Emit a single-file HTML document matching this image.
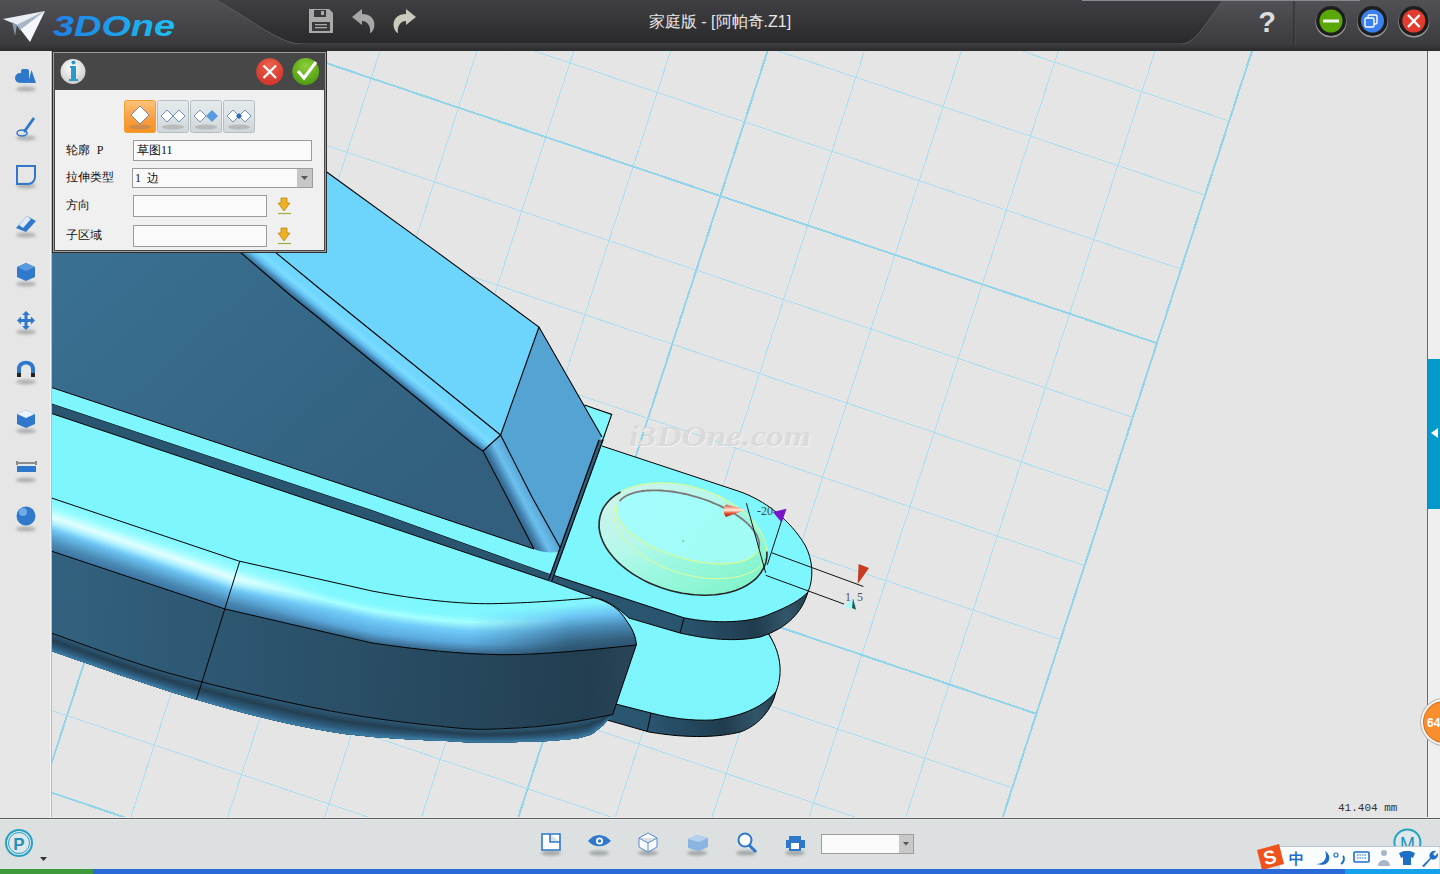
<!DOCTYPE html>
<html><head><meta charset="utf-8">
<style>
*{margin:0;padding:0;box-sizing:border-box}
html,body{width:1440px;height:874px;overflow:hidden;background:#e5e5e5;font-family:"Liberation Sans",sans-serif}
.abs{position:absolute}
.gt{stroke:#aadef0;stroke-width:1;shape-rendering:crispEdges}
.gk{stroke:#92d4ea;stroke-width:2;shape-rendering:crispEdges}
#title{left:0;top:0;width:1440px;height:51px;background:linear-gradient(#48484c,#2e2e30)}
#left{left:0;top:51px;width:51px;height:767px;background:#e6e6e6;border-right:1px solid #f4f4f4}
#rstrip{left:1428px;top:51px;width:12px;height:767px;background:#efefef;border-left:1px solid #6a6a6a}
#bottom{left:0;top:818px;width:1440px;height:52px;background:#dce0e0;border-top:1px solid #5a5a5a}
#task{left:0;top:870px;width:1440px;height:4px;background:#2a6bd8}

</style></head><body>
<svg id="scene" class="abs" width="1440" height="874" viewBox="0 0 1440 874" style="left:0;top:0">
<defs>
<clipPath id="vpclip"><rect x="51" y="51" width="1377" height="767"/></clipPath>
</defs>
<rect x="0" y="0" width="1440" height="874" fill="#e5e5e5"/>
<g clip-path="url(#vpclip)">
<g class="grid">
<line x1="-38.0" y1="-1046.6" x2="-568.2" y2="583.6" class="gt"/>
<line x1="49.3" y1="-1017.1" x2="-480.9" y2="613.0" class="gt"/>
<line x1="136.6" y1="-987.7" x2="-393.6" y2="642.5" class="gk"/>
<line x1="223.9" y1="-958.2" x2="-306.3" y2="672.0" class="gt"/>
<line x1="311.2" y1="-928.8" x2="-219.0" y2="701.4" class="gt"/>
<line x1="398.5" y1="-899.3" x2="-131.7" y2="730.9" class="gt"/>
<line x1="485.8" y1="-869.9" x2="-44.4" y2="760.3" class="gt"/>
<line x1="573.1" y1="-840.4" x2="42.9" y2="789.8" class="gk"/>
<line x1="660.4" y1="-811.0" x2="130.2" y2="819.2" class="gt"/>
<line x1="747.7" y1="-781.5" x2="217.5" y2="848.6" class="gt"/>
<line x1="835.0" y1="-752.1" x2="304.8" y2="878.1" class="gt"/>
<line x1="922.3" y1="-722.6" x2="392.1" y2="907.5" class="gt"/>
<line x1="1009.6" y1="-693.2" x2="479.4" y2="937.0" class="gk"/>
<line x1="1096.9" y1="-663.8" x2="566.7" y2="966.5" class="gt"/>
<line x1="1184.2" y1="-634.3" x2="654.0" y2="995.9" class="gt"/>
<line x1="1271.5" y1="-604.8" x2="741.3" y2="1025.3" class="gt"/>
<line x1="1358.8" y1="-575.4" x2="828.6" y2="1054.8" class="gt"/>
<line x1="1446.1" y1="-545.9" x2="915.9" y2="1084.2" class="gk"/>
<line x1="-38.0" y1="-1046.6" x2="1446.1" y2="-545.9" class="gt"/>
<line x1="-62.1" y1="-972.5" x2="1422.0" y2="-471.8" class="gt"/>
<line x1="-86.2" y1="-898.4" x2="1397.9" y2="-397.8" class="gk"/>
<line x1="-110.3" y1="-824.3" x2="1373.8" y2="-323.6" class="gt"/>
<line x1="-134.4" y1="-750.2" x2="1349.7" y2="-249.5" class="gt"/>
<line x1="-158.5" y1="-676.1" x2="1325.6" y2="-175.4" class="gt"/>
<line x1="-182.6" y1="-602.0" x2="1301.5" y2="-101.3" class="gt"/>
<line x1="-206.7" y1="-527.9" x2="1277.4" y2="-27.2" class="gk"/>
<line x1="-230.8" y1="-453.8" x2="1253.3" y2="46.9" class="gt"/>
<line x1="-254.9" y1="-379.7" x2="1229.2" y2="121.0" class="gt"/>
<line x1="-279.0" y1="-305.6" x2="1205.1" y2="195.1" class="gt"/>
<line x1="-303.1" y1="-231.5" x2="1181.0" y2="269.1" class="gt"/>
<line x1="-327.2" y1="-157.4" x2="1156.9" y2="343.2" class="gk"/>
<line x1="-351.3" y1="-83.3" x2="1132.8" y2="417.4" class="gt"/>
<line x1="-375.4" y1="-9.2" x2="1108.7" y2="491.4" class="gt"/>
<line x1="-399.5" y1="64.9" x2="1084.6" y2="565.5" class="gt"/>
<line x1="-423.6" y1="139.0" x2="1060.5" y2="639.6" class="gt"/>
<line x1="-447.7" y1="213.1" x2="1036.4" y2="713.8" class="gk"/>
<line x1="-471.8" y1="287.2" x2="1012.3" y2="787.8" class="gt"/>
<line x1="-495.9" y1="361.3" x2="988.2" y2="861.9" class="gt"/>
<line x1="-520.0" y1="435.4" x2="964.1" y2="936.0" class="gt"/>
<line x1="-544.1" y1="509.5" x2="940.0" y2="1010.1" class="gt"/>
<line x1="-568.2" y1="583.6" x2="915.9" y2="1084.2" class="gk"/>
</g>
<defs>
<linearGradient id="gDark" gradientUnits="userSpaceOnUse" x1="150" y1="150" x2="450" y2="480">
<stop offset="0" stop-color="#3a7193"/><stop offset="1" stop-color="#325f7e"/></linearGradient>
<linearGradient id="gFrontBig" gradientUnits="userSpaceOnUse" x1="52" y1="650" x2="640" y2="690">
<stop offset="0" stop-color="#32617f"/><stop offset="0.5" stop-color="#2a4f67"/><stop offset="0.92" stop-color="#223e50"/><stop offset="1" stop-color="#2b4658"/></linearGradient>
<linearGradient id="gBand2" gradientUnits="userSpaceOnUse" x1="680" y1="630" x2="810" y2="600">
<stop offset="0" stop-color="#2a5570"/><stop offset="0.55" stop-color="#203c4e"/><stop offset="0.8" stop-color="#33566a"/><stop offset="1" stop-color="#22404f"/></linearGradient>
<linearGradient id="gBand3" gradientUnits="userSpaceOnUse" x1="650" y1="725" x2="780" y2="700">
<stop offset="0" stop-color="#2a5570"/><stop offset="0.55" stop-color="#203c4e"/><stop offset="0.8" stop-color="#33566a"/><stop offset="1" stop-color="#22404f"/></linearGradient>
<linearGradient id="gBoss" gradientUnits="userSpaceOnUse" x1="640" y1="490" x2="740" y2="590">
<stop offset="0" stop-color="#a6fcfc"/><stop offset="0.5" stop-color="#a0fcf0"/><stop offset="1" stop-color="#80f4cc"/></linearGradient>
<linearGradient id="gFrontFil" gradientUnits="userSpaceOnUse" x1="503.3" y1="490" x2="524" y2="479.2">
<stop offset="0" stop-color="#34668a"/><stop offset="0.15" stop-color="#3a74a0"/><stop offset="0.55" stop-color="#6cc0ee"/><stop offset="0.78" stop-color="#62b2e2"/><stop offset="1" stop-color="#55a3d3"/></linearGradient>
<linearGradient id="gRidge" gradientUnits="userSpaceOnUse" x1="400" y1="384.4" x2="415.2" y2="365.9">
<stop offset="0" stop-color="#35678a"/><stop offset="0.06" stop-color="#3c76a2"/><stop offset="0.3" stop-color="#62c0f0"/><stop offset="0.5" stop-color="#7cdcff"/><stop offset="0.7" stop-color="#70d6fd"/><stop offset="1" stop-color="#6dd5fc"/></linearGradient>
<linearGradient id="gFil1" gradientUnits="userSpaceOnUse" x1="330" y1="580" x2="318" y2="632">
<stop offset="0" stop-color="#7ef6fe"/><stop offset="0.3" stop-color="#90fcff"/><stop offset="0.42" stop-color="#a8ffff"/><stop offset="0.6" stop-color="#6ac6f6"/><stop offset="0.8" stop-color="#3f7ca2"/><stop offset="1" stop-color="#30607f"/></linearGradient>
</defs>
<!-- lower tongue -->
<path d="M600,600 L767,630 C780,650 784,672 776,691.5 C772,710 758,726 740,732 C720,737 690,739 649,732 L600,718 Z" fill="url(#gBand3)"/>
<path d="M590,595 L690,600 L767,632 C780,650 784,672 776,691.5 C765,705 745,716 713,720 C690,721 670,718 651,713 L600,700 Z" fill="#7ef5fd" stroke="#000" stroke-width="1"/>
<line x1="651" y1="713" x2="647" y2="732" stroke="#000" stroke-width="1"/>
<path d="M776,691.5 C772,710 758,726 740,732 C720,737 690,739 649,732 L600,718" fill="none" stroke="#000" stroke-width="1"/>
<!-- big cyan lower top face -->
<path d="M51,400 L372,510 L552,575 L700,625 L640,660 L372,630 L51,530 Z" fill="#7ef6fe"/>
<!-- big piece fillet -->
<defs><clipPath id="fbclip"><path d="M51,497.8 L238.7,561 L372,591 C420,600 460,604 491.6,603.7 C530,603 570,600 594.2,597.6 C610,602 620,610 626,620 C632,628 636,636 636.3,645 L636.3,645 C590,650 540,655 502,654.7 C460,654 420,650 372,643 L225,609 L51,551 Z"/></clipPath></defs><g clip-path="url(#fbclip)"><defs><linearGradient id="fb0" gradientUnits="userSpaceOnUse" x1="51" y1="0" x2="660" y2="0"><stop offset="0.000" stop-color="#81f7fe"/><stop offset="0.310" stop-color="#81f7fe"/><stop offset="0.458" stop-color="#7ef6fe"/><stop offset="0.688" stop-color="#7ef6fe"/><stop offset="0.852" stop-color="#7ff6fe"/><stop offset="1.000" stop-color="#7ff6fe"/></linearGradient><linearGradient id="fb1" gradientUnits="userSpaceOnUse" x1="51" y1="0" x2="660" y2="0"><stop offset="0.000" stop-color="#86f8fe"/><stop offset="0.310" stop-color="#86f8fe"/><stop offset="0.458" stop-color="#7ef6fe"/><stop offset="0.688" stop-color="#7ef6fe"/><stop offset="0.852" stop-color="#81f5fe"/><stop offset="1.000" stop-color="#81f5fe"/></linearGradient><linearGradient id="fb2" gradientUnits="userSpaceOnUse" x1="51" y1="0" x2="660" y2="0"><stop offset="0.000" stop-color="#8bf9fe"/><stop offset="0.310" stop-color="#8bf9fe"/><stop offset="0.458" stop-color="#7ff7fe"/><stop offset="0.688" stop-color="#7ff7fe"/><stop offset="0.852" stop-color="#83f4fe"/><stop offset="1.000" stop-color="#83f4fe"/></linearGradient><linearGradient id="fb3" gradientUnits="userSpaceOnUse" x1="51" y1="0" x2="660" y2="0"><stop offset="0.000" stop-color="#90faff"/><stop offset="0.310" stop-color="#90faff"/><stop offset="0.458" stop-color="#7ff7fe"/><stop offset="0.688" stop-color="#7ff7fe"/><stop offset="0.852" stop-color="#81effd"/><stop offset="1.000" stop-color="#81effd"/></linearGradient><linearGradient id="fb4" gradientUnits="userSpaceOnUse" x1="51" y1="0" x2="660" y2="0"><stop offset="0.000" stop-color="#95fbff"/><stop offset="0.310" stop-color="#95fbff"/><stop offset="0.458" stop-color="#7ff7ff"/><stop offset="0.688" stop-color="#7ff7ff"/><stop offset="0.852" stop-color="#7de7fc"/><stop offset="1.000" stop-color="#7de7fc"/></linearGradient><linearGradient id="fb5" gradientUnits="userSpaceOnUse" x1="51" y1="0" x2="660" y2="0"><stop offset="0.000" stop-color="#9ffcff"/><stop offset="0.310" stop-color="#9ffcff"/><stop offset="0.458" stop-color="#80f8ff"/><stop offset="0.688" stop-color="#80f8ff"/><stop offset="0.852" stop-color="#79e0fa"/><stop offset="1.000" stop-color="#79e0fa"/></linearGradient><linearGradient id="fb6" gradientUnits="userSpaceOnUse" x1="51" y1="0" x2="660" y2="0"><stop offset="0.000" stop-color="#aefdff"/><stop offset="0.310" stop-color="#aefdff"/><stop offset="0.458" stop-color="#80f8ff"/><stop offset="0.688" stop-color="#80f8ff"/><stop offset="0.852" stop-color="#76d8f9"/><stop offset="1.000" stop-color="#76d8f9"/></linearGradient><linearGradient id="fb7" gradientUnits="userSpaceOnUse" x1="51" y1="0" x2="660" y2="0"><stop offset="0.000" stop-color="#bdfdff"/><stop offset="0.310" stop-color="#bdfdff"/><stop offset="0.458" stop-color="#85f9ff"/><stop offset="0.688" stop-color="#85f9ff"/><stop offset="0.852" stop-color="#72d1f8"/><stop offset="1.000" stop-color="#72d1f8"/></linearGradient><linearGradient id="fb8" gradientUnits="userSpaceOnUse" x1="51" y1="0" x2="660" y2="0"><stop offset="0.000" stop-color="#ccfeff"/><stop offset="0.310" stop-color="#ccfeff"/><stop offset="0.458" stop-color="#90fbff"/><stop offset="0.688" stop-color="#90fbff"/><stop offset="0.852" stop-color="#6ec9f7"/><stop offset="1.000" stop-color="#6ec9f7"/></linearGradient><linearGradient id="fb9" gradientUnits="userSpaceOnUse" x1="51" y1="0" x2="660" y2="0"><stop offset="0.000" stop-color="#dbffff"/><stop offset="0.310" stop-color="#dbffff"/><stop offset="0.458" stop-color="#9afdff"/><stop offset="0.688" stop-color="#9afdff"/><stop offset="0.852" stop-color="#69c2f1"/><stop offset="1.000" stop-color="#69c2f1"/></linearGradient><linearGradient id="fb10" gradientUnits="userSpaceOnUse" x1="51" y1="0" x2="660" y2="0"><stop offset="0.000" stop-color="#dcfdff"/><stop offset="0.310" stop-color="#dcfdff"/><stop offset="0.458" stop-color="#a5ffff"/><stop offset="0.688" stop-color="#a5ffff"/><stop offset="0.852" stop-color="#65b9e8"/><stop offset="1.000" stop-color="#65b9e8"/></linearGradient><linearGradient id="fb11" gradientUnits="userSpaceOnUse" x1="51" y1="0" x2="660" y2="0"><stop offset="0.000" stop-color="#cbf8ff"/><stop offset="0.310" stop-color="#cbf8ff"/><stop offset="0.458" stop-color="#9cf6fe"/><stop offset="0.688" stop-color="#9cf6fe"/><stop offset="0.852" stop-color="#60b1e0"/><stop offset="1.000" stop-color="#60b1e0"/></linearGradient><linearGradient id="fb12" gradientUnits="userSpaceOnUse" x1="51" y1="0" x2="660" y2="0"><stop offset="0.000" stop-color="#b9f3ff"/><stop offset="0.310" stop-color="#b9f3ff"/><stop offset="0.458" stop-color="#91ebfc"/><stop offset="0.688" stop-color="#91ebfc"/><stop offset="0.852" stop-color="#5ba9d7"/><stop offset="1.000" stop-color="#5ba9d7"/></linearGradient><linearGradient id="fb13" gradientUnits="userSpaceOnUse" x1="51" y1="0" x2="660" y2="0"><stop offset="0.000" stop-color="#a7edff"/><stop offset="0.310" stop-color="#a7edff"/><stop offset="0.458" stop-color="#86e0fb"/><stop offset="0.688" stop-color="#86e0fb"/><stop offset="0.852" stop-color="#57a1ce"/><stop offset="1.000" stop-color="#57a1ce"/></linearGradient><linearGradient id="fb14" gradientUnits="userSpaceOnUse" x1="51" y1="0" x2="660" y2="0"><stop offset="0.000" stop-color="#95e1fc"/><stop offset="0.310" stop-color="#95e1fc"/><stop offset="0.458" stop-color="#7ad6f9"/><stop offset="0.688" stop-color="#7ad6f9"/><stop offset="0.852" stop-color="#5298c5"/><stop offset="1.000" stop-color="#5298c5"/></linearGradient><linearGradient id="fb15" gradientUnits="userSpaceOnUse" x1="51" y1="0" x2="660" y2="0"><stop offset="0.000" stop-color="#83d4f8"/><stop offset="0.310" stop-color="#83d4f8"/><stop offset="0.458" stop-color="#70cbf8"/><stop offset="0.688" stop-color="#70cbf8"/><stop offset="0.852" stop-color="#4d90bd"/><stop offset="1.000" stop-color="#4d90bd"/></linearGradient><linearGradient id="fb16" gradientUnits="userSpaceOnUse" x1="51" y1="0" x2="660" y2="0"><stop offset="0.000" stop-color="#71c8f5"/><stop offset="0.310" stop-color="#71c8f5"/><stop offset="0.458" stop-color="#6dc6f4"/><stop offset="0.688" stop-color="#6dc6f4"/><stop offset="0.852" stop-color="#4989b4"/><stop offset="1.000" stop-color="#4989b4"/></linearGradient><linearGradient id="fb17" gradientUnits="userSpaceOnUse" x1="51" y1="0" x2="660" y2="0"><stop offset="0.000" stop-color="#69beee"/><stop offset="0.310" stop-color="#69beee"/><stop offset="0.458" stop-color="#69c1f0"/><stop offset="0.688" stop-color="#69c1f0"/><stop offset="0.852" stop-color="#4683ad"/><stop offset="1.000" stop-color="#4683ad"/></linearGradient><linearGradient id="fb18" gradientUnits="userSpaceOnUse" x1="51" y1="0" x2="660" y2="0"><stop offset="0.000" stop-color="#64b6e4"/><stop offset="0.310" stop-color="#64b6e4"/><stop offset="0.458" stop-color="#66bcec"/><stop offset="0.688" stop-color="#66bcec"/><stop offset="0.852" stop-color="#437da5"/><stop offset="1.000" stop-color="#437da5"/></linearGradient><linearGradient id="fb19" gradientUnits="userSpaceOnUse" x1="51" y1="0" x2="660" y2="0"><stop offset="0.000" stop-color="#5faedb"/><stop offset="0.310" stop-color="#5faedb"/><stop offset="0.458" stop-color="#63b7e8"/><stop offset="0.688" stop-color="#63b7e8"/><stop offset="0.852" stop-color="#40789e"/><stop offset="1.000" stop-color="#40789e"/></linearGradient><linearGradient id="fb20" gradientUnits="userSpaceOnUse" x1="51" y1="0" x2="660" y2="0"><stop offset="0.000" stop-color="#5aa5d2"/><stop offset="0.310" stop-color="#5aa5d2"/><stop offset="0.458" stop-color="#60b2e4"/><stop offset="0.688" stop-color="#60b2e4"/><stop offset="0.852" stop-color="#3d7296"/><stop offset="1.000" stop-color="#3d7296"/></linearGradient><linearGradient id="fb21" gradientUnits="userSpaceOnUse" x1="51" y1="0" x2="660" y2="0"><stop offset="0.000" stop-color="#559dc9"/><stop offset="0.310" stop-color="#559dc9"/><stop offset="0.458" stop-color="#5dade0"/><stop offset="0.688" stop-color="#5dade0"/><stop offset="0.852" stop-color="#3a6d8f"/><stop offset="1.000" stop-color="#3a6d8f"/></linearGradient><linearGradient id="fb22" gradientUnits="userSpaceOnUse" x1="51" y1="0" x2="660" y2="0"><stop offset="0.000" stop-color="#5095c0"/><stop offset="0.310" stop-color="#5095c0"/><stop offset="0.458" stop-color="#59a7db"/><stop offset="0.688" stop-color="#59a7db"/><stop offset="0.852" stop-color="#376788"/><stop offset="1.000" stop-color="#376788"/></linearGradient><linearGradient id="fb23" gradientUnits="userSpaceOnUse" x1="51" y1="0" x2="660" y2="0"><stop offset="0.000" stop-color="#4b8cb7"/><stop offset="0.310" stop-color="#4b8cb7"/><stop offset="0.458" stop-color="#539bcc"/><stop offset="0.688" stop-color="#539bcc"/><stop offset="0.852" stop-color="#346280"/><stop offset="1.000" stop-color="#346280"/></linearGradient><linearGradient id="fb24" gradientUnits="userSpaceOnUse" x1="51" y1="0" x2="660" y2="0"><stop offset="0.000" stop-color="#4886b1"/><stop offset="0.310" stop-color="#4886b1"/><stop offset="0.458" stop-color="#4e8fbd"/><stop offset="0.688" stop-color="#4e8fbd"/><stop offset="0.852" stop-color="#325e7c"/><stop offset="1.000" stop-color="#325e7c"/></linearGradient><linearGradient id="fb25" gradientUnits="userSpaceOnUse" x1="51" y1="0" x2="660" y2="0"><stop offset="0.000" stop-color="#4480ac"/><stop offset="0.310" stop-color="#4480ac"/><stop offset="0.458" stop-color="#4883ae"/><stop offset="0.688" stop-color="#4883ae"/><stop offset="0.852" stop-color="#305a79"/><stop offset="1.000" stop-color="#305a79"/></linearGradient><linearGradient id="fb26" gradientUnits="userSpaceOnUse" x1="51" y1="0" x2="660" y2="0"><stop offset="0.000" stop-color="#417ba7"/><stop offset="0.310" stop-color="#417ba7"/><stop offset="0.458" stop-color="#40779f"/><stop offset="0.688" stop-color="#40779f"/><stop offset="0.852" stop-color="#2e5776"/><stop offset="1.000" stop-color="#2e5776"/></linearGradient><linearGradient id="fb27" gradientUnits="userSpaceOnUse" x1="51" y1="0" x2="660" y2="0"><stop offset="0.000" stop-color="#3e75a2"/><stop offset="0.310" stop-color="#3e75a2"/><stop offset="0.458" stop-color="#386c91"/><stop offset="0.688" stop-color="#386c91"/><stop offset="0.852" stop-color="#2d5473"/><stop offset="1.000" stop-color="#2d5473"/></linearGradient></defs><path d="M51.0,497.8 L74.5,505.7 L97.9,513.6 L121.4,521.5 L144.8,529.4 L168.3,537.3 L191.8,545.2 L215.2,553.1 L238.7,561.0 L260.9,566.0 L283.1,571.0 L305.4,576.0 L327.6,581.0 L349.8,586.0 L372.0,591.0 L386.2,593.6 L400.5,595.9 L414.8,598.0 L429.2,599.8 L443.5,601.4 L457.9,602.6 L472.4,603.4 L486.8,603.7 L501.3,603.5 L515.7,603.0 L530.2,602.3 L544.6,601.5 L559.1,600.6 L573.5,599.4 L587.9,598.2 L602.3,597.0 L616.7,596.0 L631.1,595.0 L645.6,594.0 L660.0,593.0 L660.0,641.0 L645.7,643.4 L631.4,645.5 L617.0,647.0 L602.6,648.5 L588.2,649.9 L573.8,651.2 L559.4,652.3 L545.0,653.3 L530.5,654.1 L516.1,654.6 L501.6,654.7 L487.1,654.3 L472.7,653.6 L458.2,652.7 L443.8,651.6 L429.4,650.2 L415.0,648.7 L400.7,646.9 L386.3,645.0 L372.0,643.0 L347.5,637.3 L323.0,631.7 L298.5,626.0 L274.0,620.3 L249.5,614.7 L225.0,609.0 L203.3,601.8 L181.5,594.5 L159.8,587.2 L138.0,580.0 L116.2,572.8 L94.5,565.5 L72.8,558.2 L51.0,551.0 Z" fill="url(#fb0)"/><path d="M51.0,499.7 L74.4,507.6 L97.8,515.5 L121.2,523.3 L144.6,531.2 L168.0,539.1 L191.4,547.0 L214.8,554.8 L238.2,562.7 L260.5,567.7 L282.8,572.8 L305.1,577.8 L327.4,582.8 L349.7,587.8 L372.0,592.9 L386.2,595.4 L400.5,597.7 L414.8,599.8 L429.2,601.6 L443.5,603.2 L458.0,604.4 L472.4,605.2 L486.8,605.5 L501.3,605.3 L515.8,604.8 L530.2,604.2 L544.6,603.4 L559.1,602.4 L573.5,601.3 L587.9,600.0 L602.3,598.9 L616.7,597.8 L631.2,596.8 L645.6,595.8 L660.0,594.7 L660.0,641.0 L645.7,643.4 L631.4,645.5 L617.0,647.0 L602.6,648.5 L588.2,649.9 L573.8,651.2 L559.4,652.3 L545.0,653.3 L530.5,654.1 L516.1,654.6 L501.6,654.7 L487.1,654.3 L472.7,653.6 L458.2,652.7 L443.8,651.6 L429.4,650.2 L415.0,648.7 L400.7,646.9 L386.3,645.0 L372.0,643.0 L347.5,637.3 L323.0,631.7 L298.5,626.0 L274.0,620.3 L249.5,614.7 L225.0,609.0 L203.3,601.8 L181.5,594.5 L159.8,587.2 L138.0,580.0 L116.2,572.8 L94.5,565.5 L72.8,558.2 L51.0,551.0 Z" fill="url(#fb1)"/><path d="M51.0,501.6 L74.3,509.5 L97.7,517.3 L121.0,525.2 L144.4,533.0 L167.7,540.9 L191.0,548.7 L214.4,556.6 L237.7,564.4 L260.1,569.5 L282.5,574.5 L304.9,579.6 L327.2,584.6 L349.6,589.7 L372.0,594.7 L386.2,597.2 L400.5,599.5 L414.8,601.6 L429.2,603.4 L443.6,605.0 L458.0,606.2 L472.4,607.0 L486.9,607.3 L501.3,607.1 L515.8,606.7 L530.2,606.0 L544.7,605.2 L559.1,604.3 L573.5,603.1 L587.9,601.9 L602.3,600.7 L616.7,599.7 L631.2,598.6 L645.6,597.5 L660.0,596.4 L660.0,641.0 L645.7,643.4 L631.4,645.5 L617.0,647.0 L602.6,648.5 L588.2,649.9 L573.8,651.2 L559.4,652.3 L545.0,653.3 L530.5,654.1 L516.1,654.6 L501.6,654.7 L487.1,654.3 L472.7,653.6 L458.2,652.7 L443.8,651.6 L429.4,650.2 L415.0,648.7 L400.7,646.9 L386.3,645.0 L372.0,643.0 L347.5,637.3 L323.0,631.7 L298.5,626.0 L274.0,620.3 L249.5,614.7 L225.0,609.0 L203.3,601.8 L181.5,594.5 L159.8,587.2 L138.0,580.0 L116.2,572.8 L94.5,565.5 L72.8,558.2 L51.0,551.0 Z" fill="url(#fb2)"/><path d="M51.0,503.5 L74.3,511.3 L97.6,519.2 L120.8,527.0 L144.1,534.8 L167.4,542.7 L190.7,550.5 L214.0,558.3 L237.2,566.1 L259.7,571.2 L282.2,576.3 L304.6,581.4 L327.1,586.4 L349.5,591.5 L372.0,596.6 L386.2,599.1 L400.5,601.4 L414.8,603.4 L429.2,605.2 L443.6,606.8 L458.0,607.9 L472.4,608.8 L486.9,609.1 L501.3,609.0 L515.8,608.5 L530.2,607.9 L544.7,607.1 L559.1,606.1 L573.5,605.0 L587.9,603.7 L602.3,602.5 L616.8,601.5 L631.2,600.4 L645.6,599.3 L660.0,598.1 L660.0,641.0 L645.7,643.4 L631.4,645.5 L617.0,647.0 L602.6,648.5 L588.2,649.9 L573.8,651.2 L559.4,652.3 L545.0,653.3 L530.5,654.1 L516.1,654.6 L501.6,654.7 L487.1,654.3 L472.7,653.6 L458.2,652.7 L443.8,651.6 L429.4,650.2 L415.0,648.7 L400.7,646.9 L386.3,645.0 L372.0,643.0 L347.5,637.3 L323.0,631.7 L298.5,626.0 L274.0,620.3 L249.5,614.7 L225.0,609.0 L203.3,601.8 L181.5,594.5 L159.8,587.2 L138.0,580.0 L116.2,572.8 L94.5,565.5 L72.8,558.2 L51.0,551.0 Z" fill="url(#fb3)"/><path d="M51.0,505.4 L74.2,513.2 L97.4,521.0 L120.7,528.8 L143.9,536.6 L167.1,544.4 L190.3,552.2 L213.5,560.1 L236.7,567.9 L259.3,573.0 L281.8,578.0 L304.4,583.1 L326.9,588.2 L349.5,593.3 L372.0,598.4 L386.2,600.9 L400.5,603.2 L414.8,605.2 L429.2,607.0 L443.6,608.5 L458.0,609.7 L472.4,610.6 L486.9,610.9 L501.3,610.8 L515.8,610.4 L530.2,609.7 L544.7,608.9 L559.1,608.0 L573.5,606.8 L587.9,605.6 L602.3,604.4 L616.8,603.3 L631.2,602.2 L645.6,601.1 L660.0,599.9 L660.0,641.0 L645.7,643.4 L631.4,645.5 L617.0,647.0 L602.6,648.5 L588.2,649.9 L573.8,651.2 L559.4,652.3 L545.0,653.3 L530.5,654.1 L516.1,654.6 L501.6,654.7 L487.1,654.3 L472.7,653.6 L458.2,652.7 L443.8,651.6 L429.4,650.2 L415.0,648.7 L400.7,646.9 L386.3,645.0 L372.0,643.0 L347.5,637.3 L323.0,631.7 L298.5,626.0 L274.0,620.3 L249.5,614.7 L225.0,609.0 L203.3,601.8 L181.5,594.5 L159.8,587.2 L138.0,580.0 L116.2,572.8 L94.5,565.5 L72.8,558.2 L51.0,551.0 Z" fill="url(#fb4)"/><path d="M51.0,507.3 L74.2,515.1 L97.3,522.9 L120.5,530.7 L143.6,538.4 L166.8,546.2 L189.9,554.0 L213.1,561.8 L236.3,569.6 L258.9,574.7 L281.5,579.8 L304.1,584.9 L326.8,590.0 L349.4,595.2 L372.0,600.3 L386.2,602.8 L400.5,605.0 L414.8,607.1 L429.2,608.8 L443.6,610.3 L458.0,611.5 L472.4,612.4 L486.9,612.7 L501.3,612.6 L515.8,612.2 L530.3,611.6 L544.7,610.8 L559.1,609.8 L573.5,608.7 L587.9,607.4 L602.4,606.2 L616.8,605.1 L631.2,604.0 L645.6,602.8 L660.0,601.6 L660.0,641.0 L645.7,643.4 L631.4,645.5 L617.0,647.0 L602.6,648.5 L588.2,649.9 L573.8,651.2 L559.4,652.3 L545.0,653.3 L530.5,654.1 L516.1,654.6 L501.6,654.7 L487.1,654.3 L472.7,653.6 L458.2,652.7 L443.8,651.6 L429.4,650.2 L415.0,648.7 L400.7,646.9 L386.3,645.0 L372.0,643.0 L347.5,637.3 L323.0,631.7 L298.5,626.0 L274.0,620.3 L249.5,614.7 L225.0,609.0 L203.3,601.8 L181.5,594.5 L159.8,587.2 L138.0,580.0 L116.2,572.8 L94.5,565.5 L72.8,558.2 L51.0,551.0 Z" fill="url(#fb5)"/><path d="M51.0,509.2 L74.1,517.0 L97.2,524.7 L120.3,532.5 L143.4,540.2 L166.5,548.0 L189.6,555.8 L212.7,563.5 L235.8,571.3 L258.5,576.4 L281.2,581.6 L303.9,586.7 L326.6,591.9 L349.3,597.0 L372.0,602.1 L386.3,604.6 L400.5,606.8 L414.9,608.9 L429.2,610.6 L443.6,612.1 L458.0,613.3 L472.4,614.2 L486.9,614.5 L501.4,614.4 L515.8,614.0 L530.3,613.4 L544.7,612.6 L559.1,611.6 L573.6,610.5 L588.0,609.3 L602.4,608.1 L616.8,607.0 L631.2,605.8 L645.6,604.6 L660.0,603.3 L660.0,641.0 L645.7,643.4 L631.4,645.5 L617.0,647.0 L602.6,648.5 L588.2,649.9 L573.8,651.2 L559.4,652.3 L545.0,653.3 L530.5,654.1 L516.1,654.6 L501.6,654.7 L487.1,654.3 L472.7,653.6 L458.2,652.7 L443.8,651.6 L429.4,650.2 L415.0,648.7 L400.7,646.9 L386.3,645.0 L372.0,643.0 L347.5,637.3 L323.0,631.7 L298.5,626.0 L274.0,620.3 L249.5,614.7 L225.0,609.0 L203.3,601.8 L181.5,594.5 L159.8,587.2 L138.0,580.0 L116.2,572.8 L94.5,565.5 L72.8,558.2 L51.0,551.0 Z" fill="url(#fb6)"/><path d="M51.0,511.1 L74.0,518.8 L97.1,526.6 L120.1,534.3 L143.1,542.0 L166.2,549.8 L189.2,557.5 L212.2,565.3 L235.3,573.0 L258.1,578.2 L280.9,583.3 L303.6,588.5 L326.4,593.7 L349.2,598.8 L372.0,604.0 L386.3,606.4 L400.5,608.7 L414.9,610.7 L429.2,612.4 L443.6,613.9 L458.0,615.1 L472.5,615.9 L486.9,616.3 L501.4,616.3 L515.8,615.9 L530.3,615.3 L544.7,614.5 L559.1,613.5 L573.6,612.4 L588.0,611.1 L602.4,609.9 L616.8,608.8 L631.2,607.6 L645.6,606.4 L660.0,605.0 L660.0,641.0 L645.7,643.4 L631.4,645.5 L617.0,647.0 L602.6,648.5 L588.2,649.9 L573.8,651.2 L559.4,652.3 L545.0,653.3 L530.5,654.1 L516.1,654.6 L501.6,654.7 L487.1,654.3 L472.7,653.6 L458.2,652.7 L443.8,651.6 L429.4,650.2 L415.0,648.7 L400.7,646.9 L386.3,645.0 L372.0,643.0 L347.5,637.3 L323.0,631.7 L298.5,626.0 L274.0,620.3 L249.5,614.7 L225.0,609.0 L203.3,601.8 L181.5,594.5 L159.8,587.2 L138.0,580.0 L116.2,572.8 L94.5,565.5 L72.8,558.2 L51.0,551.0 Z" fill="url(#fb7)"/><path d="M51.0,513.0 L74.0,520.7 L96.9,528.4 L119.9,536.1 L142.9,543.9 L165.9,551.6 L188.8,559.3 L211.8,567.0 L234.8,574.7 L257.7,579.9 L280.5,585.1 L303.4,590.3 L326.3,595.5 L349.1,600.7 L372.0,605.9 L386.3,608.3 L400.5,610.5 L414.9,612.5 L429.2,614.2 L443.6,615.7 L458.0,616.9 L472.5,617.7 L486.9,618.1 L501.4,618.1 L515.8,617.7 L530.3,617.1 L544.7,616.3 L559.2,615.3 L573.6,614.2 L588.0,613.0 L602.4,611.7 L616.8,610.6 L631.2,609.4 L645.6,608.1 L660.0,606.7 L660.0,641.0 L645.7,643.4 L631.4,645.5 L617.0,647.0 L602.6,648.5 L588.2,649.9 L573.8,651.2 L559.4,652.3 L545.0,653.3 L530.5,654.1 L516.1,654.6 L501.6,654.7 L487.1,654.3 L472.7,653.6 L458.2,652.7 L443.8,651.6 L429.4,650.2 L415.0,648.7 L400.7,646.9 L386.3,645.0 L372.0,643.0 L347.5,637.3 L323.0,631.7 L298.5,626.0 L274.0,620.3 L249.5,614.7 L225.0,609.0 L203.3,601.8 L181.5,594.5 L159.8,587.2 L138.0,580.0 L116.2,572.8 L94.5,565.5 L72.8,558.2 L51.0,551.0 Z" fill="url(#fb8)"/><path d="M51.0,514.9 L73.9,522.6 L96.8,530.3 L119.7,538.0 L142.6,545.7 L165.6,553.4 L188.5,561.0 L211.4,568.7 L234.3,576.4 L257.2,581.6 L280.2,586.9 L303.1,592.1 L326.1,597.3 L349.0,602.5 L372.0,607.7 L386.3,610.1 L400.6,612.3 L414.9,614.3 L429.2,616.0 L443.6,617.5 L458.0,618.7 L472.5,619.5 L486.9,620.0 L501.4,619.9 L515.8,619.6 L530.3,619.0 L544.7,618.2 L559.2,617.2 L573.6,616.1 L588.0,614.8 L602.4,613.6 L616.8,612.4 L631.2,611.3 L645.6,609.9 L660.0,608.4 L660.0,641.0 L645.7,643.4 L631.4,645.5 L617.0,647.0 L602.6,648.5 L588.2,649.9 L573.8,651.2 L559.4,652.3 L545.0,653.3 L530.5,654.1 L516.1,654.6 L501.6,654.7 L487.1,654.3 L472.7,653.6 L458.2,652.7 L443.8,651.6 L429.4,650.2 L415.0,648.7 L400.7,646.9 L386.3,645.0 L372.0,643.0 L347.5,637.3 L323.0,631.7 L298.5,626.0 L274.0,620.3 L249.5,614.7 L225.0,609.0 L203.3,601.8 L181.5,594.5 L159.8,587.2 L138.0,580.0 L116.2,572.8 L94.5,565.5 L72.8,558.2 L51.0,551.0 Z" fill="url(#fb9)"/><path d="M51.0,516.8 L73.9,524.5 L96.7,532.1 L119.6,539.8 L142.4,547.5 L165.3,555.1 L188.1,562.8 L211.0,570.5 L233.8,578.1 L256.8,583.4 L279.9,588.6 L302.9,593.9 L325.9,599.1 L349.0,604.3 L372.0,609.6 L386.3,611.9 L400.6,614.1 L414.9,616.1 L429.2,617.8 L443.6,619.3 L458.0,620.5 L472.5,621.3 L486.9,621.8 L501.4,621.8 L515.9,621.4 L530.3,620.8 L544.8,620.0 L559.2,619.0 L573.6,617.9 L588.0,616.7 L602.4,615.4 L616.8,614.2 L631.2,613.1 L645.6,611.7 L660.0,610.1 L660.0,641.0 L645.7,643.4 L631.4,645.5 L617.0,647.0 L602.6,648.5 L588.2,649.9 L573.8,651.2 L559.4,652.3 L545.0,653.3 L530.5,654.1 L516.1,654.6 L501.6,654.7 L487.1,654.3 L472.7,653.6 L458.2,652.7 L443.8,651.6 L429.4,650.2 L415.0,648.7 L400.7,646.9 L386.3,645.0 L372.0,643.0 L347.5,637.3 L323.0,631.7 L298.5,626.0 L274.0,620.3 L249.5,614.7 L225.0,609.0 L203.3,601.8 L181.5,594.5 L159.8,587.2 L138.0,580.0 L116.2,572.8 L94.5,565.5 L72.8,558.2 L51.0,551.0 Z" fill="url(#fb10)"/><path d="M51.0,518.7 L73.8,526.3 L96.6,534.0 L119.4,541.6 L142.2,549.3 L164.9,556.9 L187.7,564.6 L210.5,572.2 L233.3,579.9 L256.4,585.1 L279.5,590.4 L302.7,595.6 L325.8,600.9 L348.9,606.2 L372.0,611.4 L386.3,613.8 L400.6,616.0 L414.9,617.9 L429.3,619.6 L443.6,621.1 L458.1,622.3 L472.5,623.1 L487.0,623.6 L501.4,623.6 L515.9,623.2 L530.3,622.7 L544.8,621.9 L559.2,620.9 L573.6,619.8 L588.0,618.5 L602.4,617.3 L616.8,616.1 L631.3,614.9 L645.6,613.4 L660.0,611.9 L660.0,641.0 L645.7,643.4 L631.4,645.5 L617.0,647.0 L602.6,648.5 L588.2,649.9 L573.8,651.2 L559.4,652.3 L545.0,653.3 L530.5,654.1 L516.1,654.6 L501.6,654.7 L487.1,654.3 L472.7,653.6 L458.2,652.7 L443.8,651.6 L429.4,650.2 L415.0,648.7 L400.7,646.9 L386.3,645.0 L372.0,643.0 L347.5,637.3 L323.0,631.7 L298.5,626.0 L274.0,620.3 L249.5,614.7 L225.0,609.0 L203.3,601.8 L181.5,594.5 L159.8,587.2 L138.0,580.0 L116.2,572.8 L94.5,565.5 L72.8,558.2 L51.0,551.0 Z" fill="url(#fb11)"/><path d="M51.0,520.6 L73.7,528.2 L96.5,535.8 L119.2,543.5 L141.9,551.1 L164.6,558.7 L187.4,566.3 L210.1,574.0 L232.8,581.6 L256.0,586.9 L279.2,592.1 L302.4,597.4 L325.6,602.7 L348.8,608.0 L372.0,613.3 L386.3,615.6 L400.6,617.8 L414.9,619.7 L429.3,621.4 L443.7,622.9 L458.1,624.1 L472.5,624.9 L487.0,625.4 L501.4,625.4 L515.9,625.1 L530.3,624.5 L544.8,623.7 L559.2,622.7 L573.6,621.6 L588.0,620.4 L602.4,619.1 L616.9,617.9 L631.3,616.7 L645.6,615.2 L660.0,613.6 L660.0,641.0 L645.7,643.4 L631.4,645.5 L617.0,647.0 L602.6,648.5 L588.2,649.9 L573.8,651.2 L559.4,652.3 L545.0,653.3 L530.5,654.1 L516.1,654.6 L501.6,654.7 L487.1,654.3 L472.7,653.6 L458.2,652.7 L443.8,651.6 L429.4,650.2 L415.0,648.7 L400.7,646.9 L386.3,645.0 L372.0,643.0 L347.5,637.3 L323.0,631.7 L298.5,626.0 L274.0,620.3 L249.5,614.7 L225.0,609.0 L203.3,601.8 L181.5,594.5 L159.8,587.2 L138.0,580.0 L116.2,572.8 L94.5,565.5 L72.8,558.2 L51.0,551.0 Z" fill="url(#fb12)"/><path d="M51.0,522.5 L73.7,530.1 L96.3,537.7 L119.0,545.3 L141.7,552.9 L164.3,560.5 L187.0,568.1 L209.7,575.7 L232.3,583.3 L255.6,588.6 L278.9,593.9 L302.2,599.2 L325.4,604.5 L348.7,609.8 L372.0,615.1 L386.3,617.5 L400.6,619.6 L414.9,621.5 L429.3,623.2 L443.7,624.7 L458.1,625.9 L472.5,626.7 L487.0,627.2 L501.4,627.2 L515.9,626.9 L530.3,626.3 L544.8,625.6 L559.2,624.6 L573.6,623.5 L588.1,622.2 L602.5,620.9 L616.9,619.7 L631.3,618.5 L645.6,616.9 L660.0,615.3 L660.0,641.0 L645.7,643.4 L631.4,645.5 L617.0,647.0 L602.6,648.5 L588.2,649.9 L573.8,651.2 L559.4,652.3 L545.0,653.3 L530.5,654.1 L516.1,654.6 L501.6,654.7 L487.1,654.3 L472.7,653.6 L458.2,652.7 L443.8,651.6 L429.4,650.2 L415.0,648.7 L400.7,646.9 L386.3,645.0 L372.0,643.0 L347.5,637.3 L323.0,631.7 L298.5,626.0 L274.0,620.3 L249.5,614.7 L225.0,609.0 L203.3,601.8 L181.5,594.5 L159.8,587.2 L138.0,580.0 L116.2,572.8 L94.5,565.5 L72.8,558.2 L51.0,551.0 Z" fill="url(#fb13)"/><path d="M51.0,524.4 L73.6,532.0 L96.2,539.5 L118.8,547.1 L141.4,554.7 L164.0,562.3 L186.6,569.9 L209.2,577.4 L231.8,585.0 L255.2,590.3 L278.6,595.7 L301.9,601.0 L325.3,606.3 L348.6,611.7 L372.0,617.0 L386.3,619.3 L400.6,621.4 L414.9,623.3 L429.3,625.0 L443.7,626.5 L458.1,627.7 L472.5,628.5 L487.0,629.0 L501.4,629.1 L515.9,628.8 L530.4,628.2 L544.8,627.4 L559.2,626.4 L573.7,625.3 L588.1,624.0 L602.5,622.8 L616.9,621.5 L631.3,620.3 L645.7,618.7 L660.0,617.0 L660.0,641.0 L645.7,643.4 L631.4,645.5 L617.0,647.0 L602.6,648.5 L588.2,649.9 L573.8,651.2 L559.4,652.3 L545.0,653.3 L530.5,654.1 L516.1,654.6 L501.6,654.7 L487.1,654.3 L472.7,653.6 L458.2,652.7 L443.8,651.6 L429.4,650.2 L415.0,648.7 L400.7,646.9 L386.3,645.0 L372.0,643.0 L347.5,637.3 L323.0,631.7 L298.5,626.0 L274.0,620.3 L249.5,614.7 L225.0,609.0 L203.3,601.8 L181.5,594.5 L159.8,587.2 L138.0,580.0 L116.2,572.8 L94.5,565.5 L72.8,558.2 L51.0,551.0 Z" fill="url(#fb14)"/><path d="M51.0,526.3 L73.5,533.9 L96.1,541.4 L118.6,549.0 L141.2,556.5 L163.7,564.1 L186.3,571.6 L208.8,579.2 L231.4,586.7 L254.8,592.1 L278.2,597.4 L301.7,602.8 L325.1,608.1 L348.6,613.5 L372.0,618.9 L386.3,621.1 L400.6,623.2 L414.9,625.1 L429.3,626.8 L443.7,628.3 L458.1,629.4 L472.5,630.3 L487.0,630.8 L501.5,630.9 L515.9,630.6 L530.4,630.0 L544.8,629.3 L559.2,628.3 L573.7,627.2 L588.1,625.9 L602.5,624.6 L616.9,623.4 L631.3,622.1 L645.7,620.5 L660.0,618.7 L660.0,641.0 L645.7,643.4 L631.4,645.5 L617.0,647.0 L602.6,648.5 L588.2,649.9 L573.8,651.2 L559.4,652.3 L545.0,653.3 L530.5,654.1 L516.1,654.6 L501.6,654.7 L487.1,654.3 L472.7,653.6 L458.2,652.7 L443.8,651.6 L429.4,650.2 L415.0,648.7 L400.7,646.9 L386.3,645.0 L372.0,643.0 L347.5,637.3 L323.0,631.7 L298.5,626.0 L274.0,620.3 L249.5,614.7 L225.0,609.0 L203.3,601.8 L181.5,594.5 L159.8,587.2 L138.0,580.0 L116.2,572.8 L94.5,565.5 L72.8,558.2 L51.0,551.0 Z" fill="url(#fb15)"/><path d="M51.0,528.2 L73.5,535.7 L96.0,543.3 L118.5,550.8 L140.9,558.3 L163.4,565.8 L185.9,573.4 L208.4,580.9 L230.9,588.4 L254.4,593.8 L277.9,599.2 L301.4,604.6 L325.0,610.0 L348.5,615.3 L372.0,620.7 L386.3,623.0 L400.6,625.1 L414.9,627.0 L429.3,628.6 L443.7,630.1 L458.1,631.2 L472.6,632.1 L487.0,632.6 L501.5,632.7 L515.9,632.5 L530.4,631.9 L544.8,631.1 L559.3,630.1 L573.7,629.0 L588.1,627.7 L602.5,626.4 L616.9,625.2 L631.3,623.9 L645.7,622.2 L660.0,620.4 L660.0,641.0 L645.7,643.4 L631.4,645.5 L617.0,647.0 L602.6,648.5 L588.2,649.9 L573.8,651.2 L559.4,652.3 L545.0,653.3 L530.5,654.1 L516.1,654.6 L501.6,654.7 L487.1,654.3 L472.7,653.6 L458.2,652.7 L443.8,651.6 L429.4,650.2 L415.0,648.7 L400.7,646.9 L386.3,645.0 L372.0,643.0 L347.5,637.3 L323.0,631.7 L298.5,626.0 L274.0,620.3 L249.5,614.7 L225.0,609.0 L203.3,601.8 L181.5,594.5 L159.8,587.2 L138.0,580.0 L116.2,572.8 L94.5,565.5 L72.8,558.2 L51.0,551.0 Z" fill="url(#fb16)"/><path d="M51.0,530.1 L73.4,537.6 L95.8,545.1 L118.3,552.6 L140.7,560.1 L163.1,567.6 L185.5,575.1 L208.0,582.6 L230.4,590.1 L254.0,595.5 L277.6,601.0 L301.2,606.4 L324.8,611.8 L348.4,617.2 L372.0,622.6 L386.3,624.8 L400.6,626.9 L414.9,628.8 L429.3,630.4 L443.7,631.9 L458.1,633.0 L472.6,633.9 L487.0,634.4 L501.5,634.6 L515.9,634.3 L530.4,633.7 L544.8,633.0 L559.3,632.0 L573.7,630.9 L588.1,629.6 L602.5,628.3 L616.9,627.0 L631.3,625.7 L645.7,624.0 L660.0,622.1 L660.0,641.0 L645.7,643.4 L631.4,645.5 L617.0,647.0 L602.6,648.5 L588.2,649.9 L573.8,651.2 L559.4,652.3 L545.0,653.3 L530.5,654.1 L516.1,654.6 L501.6,654.7 L487.1,654.3 L472.7,653.6 L458.2,652.7 L443.8,651.6 L429.4,650.2 L415.0,648.7 L400.7,646.9 L386.3,645.0 L372.0,643.0 L347.5,637.3 L323.0,631.7 L298.5,626.0 L274.0,620.3 L249.5,614.7 L225.0,609.0 L203.3,601.8 L181.5,594.5 L159.8,587.2 L138.0,580.0 L116.2,572.8 L94.5,565.5 L72.8,558.2 L51.0,551.0 Z" fill="url(#fb17)"/><path d="M51.0,532.0 L73.4,539.5 L95.7,547.0 L118.1,554.4 L140.4,561.9 L162.8,569.4 L185.2,576.9 L207.5,584.4 L229.9,591.9 L253.6,597.3 L277.3,602.7 L300.9,608.1 L324.6,613.6 L348.3,619.0 L372.0,624.4 L386.3,626.6 L400.6,628.7 L415.0,630.6 L429.3,632.2 L443.7,633.7 L458.1,634.8 L472.6,635.7 L487.0,636.2 L501.5,636.4 L516.0,636.1 L530.4,635.6 L544.9,634.8 L559.3,633.8 L573.7,632.7 L588.1,631.4 L602.5,630.1 L616.9,628.8 L631.3,627.5 L645.7,625.8 L660.0,623.9 L660.0,641.0 L645.7,643.4 L631.4,645.5 L617.0,647.0 L602.6,648.5 L588.2,649.9 L573.8,651.2 L559.4,652.3 L545.0,653.3 L530.5,654.1 L516.1,654.6 L501.6,654.7 L487.1,654.3 L472.7,653.6 L458.2,652.7 L443.8,651.6 L429.4,650.2 L415.0,648.7 L400.7,646.9 L386.3,645.0 L372.0,643.0 L347.5,637.3 L323.0,631.7 L298.5,626.0 L274.0,620.3 L249.5,614.7 L225.0,609.0 L203.3,601.8 L181.5,594.5 L159.8,587.2 L138.0,580.0 L116.2,572.8 L94.5,565.5 L72.8,558.2 L51.0,551.0 Z" fill="url(#fb18)"/><path d="M51.0,533.9 L73.3,541.4 L95.6,548.8 L117.9,556.3 L140.2,563.7 L162.5,571.2 L184.8,578.7 L207.1,586.1 L229.4,593.6 L253.2,599.0 L276.9,604.5 L300.7,609.9 L324.5,615.4 L348.2,620.8 L372.0,626.3 L386.3,628.5 L400.6,630.5 L415.0,632.4 L429.3,634.0 L443.7,635.5 L458.1,636.6 L472.6,637.5 L487.0,638.0 L501.5,638.2 L516.0,638.0 L530.4,637.4 L544.9,636.7 L559.3,635.7 L573.7,634.6 L588.1,633.3 L602.5,632.0 L616.9,630.6 L631.3,629.3 L645.7,627.5 L660.0,625.6 L660.0,641.0 L645.7,643.4 L631.4,645.5 L617.0,647.0 L602.6,648.5 L588.2,649.9 L573.8,651.2 L559.4,652.3 L545.0,653.3 L530.5,654.1 L516.1,654.6 L501.6,654.7 L487.1,654.3 L472.7,653.6 L458.2,652.7 L443.8,651.6 L429.4,650.2 L415.0,648.7 L400.7,646.9 L386.3,645.0 L372.0,643.0 L347.5,637.3 L323.0,631.7 L298.5,626.0 L274.0,620.3 L249.5,614.7 L225.0,609.0 L203.3,601.8 L181.5,594.5 L159.8,587.2 L138.0,580.0 L116.2,572.8 L94.5,565.5 L72.8,558.2 L51.0,551.0 Z" fill="url(#fb19)"/><path d="M51.0,535.8 L73.2,543.2 L95.5,550.7 L117.7,558.1 L140.0,565.5 L162.2,573.0 L184.4,580.4 L206.7,587.9 L228.9,595.3 L252.8,600.8 L276.6,606.2 L300.5,611.7 L324.3,617.2 L348.2,622.7 L372.0,628.1 L386.3,630.3 L400.6,632.4 L415.0,634.2 L429.3,635.8 L443.7,637.3 L458.2,638.4 L472.6,639.3 L487.0,639.8 L501.5,640.1 L516.0,639.8 L530.4,639.3 L544.9,638.5 L559.3,637.5 L573.7,636.4 L588.1,635.1 L602.5,633.8 L616.9,632.5 L631.3,631.1 L645.7,629.3 L660.0,627.3 L660.0,641.0 L645.7,643.4 L631.4,645.5 L617.0,647.0 L602.6,648.5 L588.2,649.9 L573.8,651.2 L559.4,652.3 L545.0,653.3 L530.5,654.1 L516.1,654.6 L501.6,654.7 L487.1,654.3 L472.7,653.6 L458.2,652.7 L443.8,651.6 L429.4,650.2 L415.0,648.7 L400.7,646.9 L386.3,645.0 L372.0,643.0 L347.5,637.3 L323.0,631.7 L298.5,626.0 L274.0,620.3 L249.5,614.7 L225.0,609.0 L203.3,601.8 L181.5,594.5 L159.8,587.2 L138.0,580.0 L116.2,572.8 L94.5,565.5 L72.8,558.2 L51.0,551.0 Z" fill="url(#fb20)"/><path d="M51.0,537.7 L73.2,545.1 L95.4,552.5 L117.5,559.9 L139.7,567.4 L161.9,574.8 L184.1,582.2 L206.2,589.6 L228.4,597.0 L252.4,602.5 L276.3,608.0 L300.2,613.5 L324.1,619.0 L348.1,624.5 L372.0,630.0 L386.3,632.2 L400.6,634.2 L415.0,636.0 L429.3,637.6 L443.7,639.0 L458.2,640.2 L472.6,641.1 L487.1,641.6 L501.5,641.9 L516.0,641.7 L530.4,641.1 L544.9,640.4 L559.3,639.4 L573.7,638.2 L588.2,637.0 L602.6,635.6 L617.0,634.3 L631.4,632.9 L645.7,631.1 L660.0,629.0 L660.0,641.0 L645.7,643.4 L631.4,645.5 L617.0,647.0 L602.6,648.5 L588.2,649.9 L573.8,651.2 L559.4,652.3 L545.0,653.3 L530.5,654.1 L516.1,654.6 L501.6,654.7 L487.1,654.3 L472.7,653.6 L458.2,652.7 L443.8,651.6 L429.4,650.2 L415.0,648.7 L400.7,646.9 L386.3,645.0 L372.0,643.0 L347.5,637.3 L323.0,631.7 L298.5,626.0 L274.0,620.3 L249.5,614.7 L225.0,609.0 L203.3,601.8 L181.5,594.5 L159.8,587.2 L138.0,580.0 L116.2,572.8 L94.5,565.5 L72.8,558.2 L51.0,551.0 Z" fill="url(#fb21)"/><path d="M51.0,539.6 L73.1,547.0 L95.2,554.4 L117.4,561.8 L139.5,569.2 L161.6,576.5 L183.7,583.9 L205.8,591.3 L227.9,598.7 L251.9,604.2 L276.0,609.8 L300.0,615.3 L324.0,620.8 L348.0,626.3 L372.0,631.9 L386.3,634.0 L400.6,636.0 L415.0,637.8 L429.4,639.4 L443.8,640.8 L458.2,642.0 L472.6,642.9 L487.1,643.5 L501.5,643.7 L516.0,643.5 L530.5,643.0 L544.9,642.2 L559.3,641.2 L573.8,640.1 L588.2,638.8 L602.6,637.5 L617.0,636.1 L631.4,634.7 L645.7,632.8 L660.0,630.7 L660.0,641.0 L645.7,643.4 L631.4,645.5 L617.0,647.0 L602.6,648.5 L588.2,649.9 L573.8,651.2 L559.4,652.3 L545.0,653.3 L530.5,654.1 L516.1,654.6 L501.6,654.7 L487.1,654.3 L472.7,653.6 L458.2,652.7 L443.8,651.6 L429.4,650.2 L415.0,648.7 L400.7,646.9 L386.3,645.0 L372.0,643.0 L347.5,637.3 L323.0,631.7 L298.5,626.0 L274.0,620.3 L249.5,614.7 L225.0,609.0 L203.3,601.8 L181.5,594.5 L159.8,587.2 L138.0,580.0 L116.2,572.8 L94.5,565.5 L72.8,558.2 L51.0,551.0 Z" fill="url(#fb22)"/><path d="M51.0,541.5 L73.1,548.9 L95.1,556.2 L117.2,563.6 L139.2,571.0 L161.3,578.3 L183.3,585.7 L205.4,593.1 L227.4,600.4 L251.5,606.0 L275.6,611.5 L299.7,617.1 L323.8,622.6 L347.9,628.2 L372.0,633.7 L386.3,635.8 L400.6,637.8 L415.0,639.6 L429.4,641.2 L443.8,642.6 L458.2,643.8 L472.6,644.7 L487.1,645.3 L501.5,645.5 L516.0,645.4 L530.5,644.8 L544.9,644.1 L559.3,643.1 L573.8,641.9 L588.2,640.7 L602.6,639.3 L617.0,637.9 L631.4,636.5 L645.7,634.6 L660.0,632.4 L660.0,641.0 L645.7,643.4 L631.4,645.5 L617.0,647.0 L602.6,648.5 L588.2,649.9 L573.8,651.2 L559.4,652.3 L545.0,653.3 L530.5,654.1 L516.1,654.6 L501.6,654.7 L487.1,654.3 L472.7,653.6 L458.2,652.7 L443.8,651.6 L429.4,650.2 L415.0,648.7 L400.7,646.9 L386.3,645.0 L372.0,643.0 L347.5,637.3 L323.0,631.7 L298.5,626.0 L274.0,620.3 L249.5,614.7 L225.0,609.0 L203.3,601.8 L181.5,594.5 L159.8,587.2 L138.0,580.0 L116.2,572.8 L94.5,565.5 L72.8,558.2 L51.0,551.0 Z" fill="url(#fb23)"/><path d="M51.0,543.4 L73.0,550.7 L95.0,558.1 L117.0,565.4 L139.0,572.8 L161.0,580.1 L183.0,587.5 L205.0,594.8 L227.0,602.1 L251.1,607.7 L275.3,613.3 L299.5,618.9 L323.7,624.4 L347.8,630.0 L372.0,635.6 L386.3,637.7 L400.6,639.6 L415.0,641.4 L429.4,643.0 L443.8,644.4 L458.2,645.6 L472.6,646.5 L487.1,647.1 L501.6,647.4 L516.0,647.2 L530.5,646.7 L544.9,645.9 L559.4,644.9 L573.8,643.8 L588.2,642.5 L602.6,641.2 L617.0,639.8 L631.4,638.3 L645.7,636.4 L660.0,634.1 L660.0,641.0 L645.7,643.4 L631.4,645.5 L617.0,647.0 L602.6,648.5 L588.2,649.9 L573.8,651.2 L559.4,652.3 L545.0,653.3 L530.5,654.1 L516.1,654.6 L501.6,654.7 L487.1,654.3 L472.7,653.6 L458.2,652.7 L443.8,651.6 L429.4,650.2 L415.0,648.7 L400.7,646.9 L386.3,645.0 L372.0,643.0 L347.5,637.3 L323.0,631.7 L298.5,626.0 L274.0,620.3 L249.5,614.7 L225.0,609.0 L203.3,601.8 L181.5,594.5 L159.8,587.2 L138.0,580.0 L116.2,572.8 L94.5,565.5 L72.8,558.2 L51.0,551.0 Z" fill="url(#fb24)"/><path d="M51.0,545.3 L72.9,552.6 L94.9,559.9 L116.8,567.3 L138.7,574.6 L160.7,581.9 L182.6,589.2 L204.5,596.5 L226.5,603.9 L250.7,609.5 L275.0,615.0 L299.2,620.6 L323.5,626.2 L347.7,631.8 L372.0,637.4 L386.3,639.5 L400.7,641.5 L415.0,643.2 L429.4,644.8 L443.8,646.2 L458.2,647.4 L472.6,648.3 L487.1,648.9 L501.6,649.2 L516.0,649.0 L530.5,648.5 L544.9,647.8 L559.4,646.8 L573.8,645.6 L588.2,644.4 L602.6,643.0 L617.0,641.6 L631.4,640.1 L645.7,638.1 L660.0,635.9 L660.0,641.0 L645.7,643.4 L631.4,645.5 L617.0,647.0 L602.6,648.5 L588.2,649.9 L573.8,651.2 L559.4,652.3 L545.0,653.3 L530.5,654.1 L516.1,654.6 L501.6,654.7 L487.1,654.3 L472.7,653.6 L458.2,652.7 L443.8,651.6 L429.4,650.2 L415.0,648.7 L400.7,646.9 L386.3,645.0 L372.0,643.0 L347.5,637.3 L323.0,631.7 L298.5,626.0 L274.0,620.3 L249.5,614.7 L225.0,609.0 L203.3,601.8 L181.5,594.5 L159.8,587.2 L138.0,580.0 L116.2,572.8 L94.5,565.5 L72.8,558.2 L51.0,551.0 Z" fill="url(#fb25)"/><path d="M51.0,547.2 L72.9,554.5 L94.7,561.8 L116.6,569.1 L138.5,576.4 L160.4,583.7 L182.2,591.0 L204.1,598.3 L226.0,605.6 L250.3,611.2 L274.7,616.8 L299.0,622.4 L323.3,628.0 L347.7,633.7 L372.0,639.3 L386.3,641.4 L400.7,643.3 L415.0,645.1 L429.4,646.6 L443.8,648.0 L458.2,649.2 L472.7,650.1 L487.1,650.7 L501.6,651.0 L516.0,650.9 L530.5,650.4 L544.9,649.6 L559.4,648.6 L573.8,647.5 L588.2,646.2 L602.6,644.8 L617.0,643.4 L631.4,641.9 L645.7,639.9 L660.0,637.6 L660.0,641.0 L645.7,643.4 L631.4,645.5 L617.0,647.0 L602.6,648.5 L588.2,649.9 L573.8,651.2 L559.4,652.3 L545.0,653.3 L530.5,654.1 L516.1,654.6 L501.6,654.7 L487.1,654.3 L472.7,653.6 L458.2,652.7 L443.8,651.6 L429.4,650.2 L415.0,648.7 L400.7,646.9 L386.3,645.0 L372.0,643.0 L347.5,637.3 L323.0,631.7 L298.5,626.0 L274.0,620.3 L249.5,614.7 L225.0,609.0 L203.3,601.8 L181.5,594.5 L159.8,587.2 L138.0,580.0 L116.2,572.8 L94.5,565.5 L72.8,558.2 L51.0,551.0 Z" fill="url(#fb26)"/><path d="M51.0,549.1 L72.8,556.4 L94.6,563.6 L116.4,570.9 L138.2,578.2 L160.1,585.5 L181.9,592.7 L203.7,600.0 L225.5,607.3 L249.9,612.9 L274.3,618.6 L298.7,624.2 L323.2,629.9 L347.6,635.5 L372.0,641.1 L386.3,643.2 L400.7,645.1 L415.0,646.9 L429.4,648.4 L443.8,649.8 L458.2,651.0 L472.7,651.9 L487.1,652.5 L501.6,652.9 L516.1,652.7 L530.5,652.2 L545.0,651.5 L559.4,650.5 L573.8,649.3 L588.2,648.0 L602.6,646.7 L617.0,645.2 L631.4,643.7 L645.7,641.6 L660.0,639.3 L660.0,641.0 L645.7,643.4 L631.4,645.5 L617.0,647.0 L602.6,648.5 L588.2,649.9 L573.8,651.2 L559.4,652.3 L545.0,653.3 L530.5,654.1 L516.1,654.6 L501.6,654.7 L487.1,654.3 L472.7,653.6 L458.2,652.7 L443.8,651.6 L429.4,650.2 L415.0,648.7 L400.7,646.9 L386.3,645.0 L372.0,643.0 L347.5,637.3 L323.0,631.7 L298.5,626.0 L274.0,620.3 L249.5,614.7 L225.0,609.0 L203.3,601.8 L181.5,594.5 L159.8,587.2 L138.0,580.0 L116.2,572.8 L94.5,565.5 L72.8,558.2 L51.0,551.0 Z" fill="url(#fb27)"/></g>
<!-- big piece front face -->
<path d="M51,551 L225,609 L372,643 C420,650 460,654 502,654.7 C540,655 590,650 636.3,645 L612.6,714.7 C603.8,716.2 577.6,721.7 560.0,724.0 C542.4,726.3 525.0,727.9 507.0,728.5 C489.0,729.1 481.5,730.5 452.0,727.5 C422.5,724.5 376.5,719.7 329.8,710.8 C283.1,701.9 218.5,687.0 172.0,674.0 C125.5,661.0 71.2,639.8 51.0,633.0 Z" fill="url(#gFrontBig)"/>
<!-- big piece bottom fillet -->
<defs><linearGradient id="fc0" gradientUnits="userSpaceOnUse" x1="51" y1="0" x2="640" y2="0"><stop offset="0.000" stop-color="#2d5876"/><stop offset="1.000" stop-color="#2d5876"/></linearGradient><linearGradient id="fc1" gradientUnits="userSpaceOnUse" x1="51" y1="0" x2="640" y2="0"><stop offset="0.000" stop-color="#2b546f"/><stop offset="1.000" stop-color="#2b546f"/></linearGradient><linearGradient id="fc2" gradientUnits="userSpaceOnUse" x1="51" y1="0" x2="640" y2="0"><stop offset="0.000" stop-color="#294e68"/><stop offset="1.000" stop-color="#294e68"/></linearGradient><linearGradient id="fc3" gradientUnits="userSpaceOnUse" x1="51" y1="0" x2="640" y2="0"><stop offset="0.000" stop-color="#274a61"/><stop offset="1.000" stop-color="#274a61"/></linearGradient><linearGradient id="fc4" gradientUnits="userSpaceOnUse" x1="51" y1="0" x2="640" y2="0"><stop offset="0.000" stop-color="#25445a"/><stop offset="1.000" stop-color="#25445a"/></linearGradient><linearGradient id="fc5" gradientUnits="userSpaceOnUse" x1="51" y1="0" x2="640" y2="0"><stop offset="0.000" stop-color="#234053"/><stop offset="1.000" stop-color="#234053"/></linearGradient><linearGradient id="fc6" gradientUnits="userSpaceOnUse" x1="51" y1="0" x2="640" y2="0"><stop offset="0.000" stop-color="#25455a"/><stop offset="1.000" stop-color="#25455a"/></linearGradient><linearGradient id="fc7" gradientUnits="userSpaceOnUse" x1="51" y1="0" x2="640" y2="0"><stop offset="0.000" stop-color="#274b64"/><stop offset="1.000" stop-color="#274b64"/></linearGradient><linearGradient id="fc8" gradientUnits="userSpaceOnUse" x1="51" y1="0" x2="640" y2="0"><stop offset="0.000" stop-color="#2a516d"/><stop offset="1.000" stop-color="#2a516d"/></linearGradient><linearGradient id="fc9" gradientUnits="userSpaceOnUse" x1="51" y1="0" x2="640" y2="0"><stop offset="0.000" stop-color="#2c5877"/><stop offset="1.000" stop-color="#2c5877"/></linearGradient><linearGradient id="fc10" gradientUnits="userSpaceOnUse" x1="51" y1="0" x2="640" y2="0"><stop offset="0.000" stop-color="#2e5e80"/><stop offset="1.000" stop-color="#2e5e80"/></linearGradient><linearGradient id="fc11" gradientUnits="userSpaceOnUse" x1="51" y1="0" x2="640" y2="0"><stop offset="0.000" stop-color="#32688b"/><stop offset="1.000" stop-color="#32688b"/></linearGradient><linearGradient id="fc12" gradientUnits="userSpaceOnUse" x1="51" y1="0" x2="640" y2="0"><stop offset="0.000" stop-color="#377197"/><stop offset="1.000" stop-color="#377197"/></linearGradient><linearGradient id="fc13" gradientUnits="userSpaceOnUse" x1="51" y1="0" x2="640" y2="0"><stop offset="0.000" stop-color="#3b7ba2"/><stop offset="1.000" stop-color="#3b7ba2"/></linearGradient></defs><path d="M51.0,633.0 L64.5,637.8 L78.1,642.7 L91.6,647.6 L105.1,652.4 L118.7,657.2 L132.3,661.7 L146.0,666.2 L159.7,670.4 L173.5,674.4 L187.4,678.2 L201.3,681.8 L215.2,685.3 L229.2,688.8 L243.2,692.1 L257.2,695.4 L271.2,698.6 L285.2,701.6 L299.3,704.6 L313.4,707.6 L327.5,710.3 L341.6,712.9 L355.8,715.3 L370.0,717.6 L384.2,719.6 L398.4,721.5 L412.7,723.3 L427.0,724.9 L441.3,726.4 L455.6,727.8 L469.9,728.9 L484.3,729.3 L498.7,728.8 L513.0,728.3 L527.4,727.4 L541.7,726.1 L556.0,724.5 L570.2,722.5 L584.4,720.0 L598.5,717.4 L612.6,714.7 L612.6,714.7 L602.9,725.5 L591.5,734.5 L577.5,738.4 L563.0,739.7 L548.5,740.9 L533.9,741.6 L519.4,742.1 L504.8,742.4 L490.3,742.6 L475.7,742.5 L461.1,741.9 L446.6,741.1 L432.1,740.4 L417.5,739.7 L403.0,738.9 L388.4,738.0 L373.9,736.9 L359.4,735.5 L344.9,733.9 L330.5,731.8 L316.2,729.3 L301.9,726.5 L287.6,723.5 L273.4,720.2 L259.3,716.8 L245.1,713.2 L231.1,709.5 L217.0,705.6 L203.0,701.6 L189.0,697.5 L175.1,693.2 L161.2,688.8 L147.4,684.2 L133.6,679.6 L119.8,674.9 L106.0,670.1 L92.3,665.3 L78.5,660.5 L64.8,655.7 L51.0,651.0 Z" fill="url(#fc0)"/><path d="M51.0,634.3 L64.6,639.1 L78.1,644.0 L91.6,648.9 L105.2,653.7 L118.8,658.4 L132.4,663.0 L146.1,667.4 L159.8,671.7 L173.6,675.8 L187.5,679.6 L201.4,683.2 L215.4,686.8 L229.3,690.3 L243.3,693.6 L257.3,696.9 L271.3,700.1 L285.4,703.2 L299.5,706.2 L313.6,709.1 L327.7,711.9 L341.8,714.4 L356.0,716.8 L370.2,719.0 L384.5,720.9 L398.8,722.8 L413.1,724.4 L427.4,726.0 L441.7,727.5 L456.0,728.8 L470.3,729.9 L484.7,730.3 L499.1,729.8 L513.5,729.2 L527.8,728.4 L542.2,727.2 L556.5,725.6 L570.7,723.6 L584.9,721.1 L598.8,718.0 L612.6,714.7 L612.6,714.7 L602.9,725.5 L591.5,734.5 L577.5,738.4 L563.0,739.7 L548.5,740.9 L533.9,741.6 L519.4,742.1 L504.8,742.4 L490.3,742.6 L475.7,742.5 L461.1,741.9 L446.6,741.1 L432.1,740.4 L417.5,739.7 L403.0,738.9 L388.4,738.0 L373.9,736.9 L359.4,735.5 L344.9,733.9 L330.5,731.8 L316.2,729.3 L301.9,726.5 L287.6,723.5 L273.4,720.2 L259.3,716.8 L245.1,713.2 L231.1,709.5 L217.0,705.6 L203.0,701.6 L189.0,697.5 L175.1,693.2 L161.2,688.8 L147.4,684.2 L133.6,679.6 L119.8,674.9 L106.0,670.1 L92.3,665.3 L78.5,660.5 L64.8,655.7 L51.0,651.0 Z" fill="url(#fc1)"/><path d="M51.0,635.6 L64.6,640.4 L78.1,645.3 L91.7,650.1 L105.2,654.9 L118.8,659.7 L132.5,664.3 L146.2,668.7 L159.9,673.0 L173.7,677.1 L187.6,680.9 L201.5,684.6 L215.5,688.2 L229.5,691.7 L243.5,695.1 L257.5,698.4 L271.5,701.7 L285.6,704.8 L299.7,707.8 L313.8,710.7 L327.9,713.4 L342.1,715.9 L356.3,718.2 L370.5,720.3 L384.8,722.2 L399.1,724.0 L413.4,725.6 L427.7,727.1 L442.0,728.5 L456.4,729.8 L470.7,730.9 L485.1,731.2 L499.5,730.8 L513.9,730.2 L528.3,729.4 L542.7,728.2 L557.0,726.7 L571.2,724.8 L585.4,722.1 L599.1,718.5 L612.6,714.7 L612.6,714.7 L602.9,725.5 L591.5,734.5 L577.5,738.4 L563.0,739.7 L548.5,740.9 L533.9,741.6 L519.4,742.1 L504.8,742.4 L490.3,742.6 L475.7,742.5 L461.1,741.9 L446.6,741.1 L432.1,740.4 L417.5,739.7 L403.0,738.9 L388.4,738.0 L373.9,736.9 L359.4,735.5 L344.9,733.9 L330.5,731.8 L316.2,729.3 L301.9,726.5 L287.6,723.5 L273.4,720.2 L259.3,716.8 L245.1,713.2 L231.1,709.5 L217.0,705.6 L203.0,701.6 L189.0,697.5 L175.1,693.2 L161.2,688.8 L147.4,684.2 L133.6,679.6 L119.8,674.9 L106.0,670.1 L92.3,665.3 L78.5,660.5 L64.8,655.7 L51.0,651.0 Z" fill="url(#fc2)"/><path d="M51.0,636.9 L64.6,641.6 L78.2,646.5 L91.7,651.4 L105.3,656.2 L118.9,661.0 L132.6,665.6 L146.3,670.0 L160.0,674.3 L173.9,678.4 L187.7,682.3 L201.7,686.0 L215.6,689.7 L229.6,693.2 L243.6,696.6 L257.6,700.0 L271.7,703.2 L285.7,706.3 L299.8,709.3 L314.0,712.2 L328.1,714.9 L342.3,717.4 L356.5,719.7 L370.8,721.7 L385.1,723.6 L399.4,725.2 L413.7,726.8 L428.1,728.2 L442.4,729.6 L456.8,730.8 L471.2,731.9 L485.6,732.2 L500.0,731.7 L514.4,731.2 L528.8,730.4 L543.1,729.3 L557.5,727.8 L571.8,725.9 L585.9,723.1 L599.4,719.1 L612.6,714.7 L612.6,714.7 L602.9,725.5 L591.5,734.5 L577.5,738.4 L563.0,739.7 L548.5,740.9 L533.9,741.6 L519.4,742.1 L504.8,742.4 L490.3,742.6 L475.7,742.5 L461.1,741.9 L446.6,741.1 L432.1,740.4 L417.5,739.7 L403.0,738.9 L388.4,738.0 L373.9,736.9 L359.4,735.5 L344.9,733.9 L330.5,731.8 L316.2,729.3 L301.9,726.5 L287.6,723.5 L273.4,720.2 L259.3,716.8 L245.1,713.2 L231.1,709.5 L217.0,705.6 L203.0,701.6 L189.0,697.5 L175.1,693.2 L161.2,688.8 L147.4,684.2 L133.6,679.6 L119.8,674.9 L106.0,670.1 L92.3,665.3 L78.5,660.5 L64.8,655.7 L51.0,651.0 Z" fill="url(#fc3)"/><path d="M51.0,638.1 L64.6,642.9 L78.2,647.8 L91.8,652.7 L105.4,657.5 L119.0,662.2 L132.7,666.8 L146.4,671.3 L160.2,675.6 L174.0,679.8 L187.9,683.7 L201.8,687.5 L215.7,691.1 L229.7,694.7 L243.7,698.1 L257.8,701.5 L271.8,704.8 L285.9,707.9 L300.0,710.9 L314.2,713.8 L328.3,716.5 L342.5,718.9 L356.8,721.1 L371.1,723.1 L385.4,724.9 L399.7,726.5 L414.1,728.0 L428.4,729.3 L442.8,730.6 L457.2,731.9 L471.6,732.8 L486.0,733.1 L500.4,732.7 L514.8,732.2 L529.2,731.5 L543.6,730.3 L558.0,728.9 L572.3,727.0 L586.4,724.2 L599.7,719.7 L612.6,714.7 L612.6,714.7 L602.9,725.5 L591.5,734.5 L577.5,738.4 L563.0,739.7 L548.5,740.9 L533.9,741.6 L519.4,742.1 L504.8,742.4 L490.3,742.6 L475.7,742.5 L461.1,741.9 L446.6,741.1 L432.1,740.4 L417.5,739.7 L403.0,738.9 L388.4,738.0 L373.9,736.9 L359.4,735.5 L344.9,733.9 L330.5,731.8 L316.2,729.3 L301.9,726.5 L287.6,723.5 L273.4,720.2 L259.3,716.8 L245.1,713.2 L231.1,709.5 L217.0,705.6 L203.0,701.6 L189.0,697.5 L175.1,693.2 L161.2,688.8 L147.4,684.2 L133.6,679.6 L119.8,674.9 L106.0,670.1 L92.3,665.3 L78.5,660.5 L64.8,655.7 L51.0,651.0 Z" fill="url(#fc4)"/><path d="M51.0,639.4 L64.6,644.2 L78.2,649.1 L91.8,653.9 L105.4,658.7 L119.1,663.5 L132.8,668.1 L146.5,672.6 L160.3,677.0 L174.1,681.1 L188.0,685.1 L201.9,688.9 L215.9,692.6 L229.9,696.2 L243.9,699.6 L257.9,703.0 L272.0,706.3 L286.1,709.4 L300.2,712.5 L314.4,715.3 L328.5,718.0 L342.8,720.4 L357.1,722.6 L371.4,724.5 L385.7,726.2 L400.1,727.7 L414.4,729.1 L428.8,730.4 L443.2,731.7 L457.6,732.9 L472.0,733.8 L486.4,734.1 L500.9,733.7 L515.3,733.2 L529.7,732.5 L544.1,731.4 L558.5,729.9 L572.8,728.2 L586.9,725.2 L600.0,720.3 L612.6,714.7 L612.6,714.7 L602.9,725.5 L591.5,734.5 L577.5,738.4 L563.0,739.7 L548.5,740.9 L533.9,741.6 L519.4,742.1 L504.8,742.4 L490.3,742.6 L475.7,742.5 L461.1,741.9 L446.6,741.1 L432.1,740.4 L417.5,739.7 L403.0,738.9 L388.4,738.0 L373.9,736.9 L359.4,735.5 L344.9,733.9 L330.5,731.8 L316.2,729.3 L301.9,726.5 L287.6,723.5 L273.4,720.2 L259.3,716.8 L245.1,713.2 L231.1,709.5 L217.0,705.6 L203.0,701.6 L189.0,697.5 L175.1,693.2 L161.2,688.8 L147.4,684.2 L133.6,679.6 L119.8,674.9 L106.0,670.1 L92.3,665.3 L78.5,660.5 L64.8,655.7 L51.0,651.0 Z" fill="url(#fc5)"/><path d="M51.0,640.7 L64.6,645.5 L78.3,650.3 L91.9,655.2 L105.5,660.0 L119.2,664.7 L132.9,669.4 L146.6,673.9 L160.4,678.3 L174.2,682.5 L188.1,686.4 L202.0,690.3 L216.0,694.0 L230.0,697.6 L244.0,701.1 L258.1,704.6 L272.1,707.9 L286.2,711.0 L300.4,714.0 L314.6,716.9 L328.8,719.5 L343.0,721.9 L357.3,724.0 L371.7,725.8 L386.0,727.5 L400.4,729.0 L414.8,730.3 L429.2,731.5 L443.6,732.7 L458.0,733.9 L472.4,734.8 L486.8,735.0 L501.3,734.6 L515.7,734.2 L530.2,733.5 L544.6,732.4 L559.0,731.0 L573.3,729.3 L587.4,726.3 L600.4,720.9 L612.6,714.7 L612.6,714.7 L602.9,725.5 L591.5,734.5 L577.5,738.4 L563.0,739.7 L548.5,740.9 L533.9,741.6 L519.4,742.1 L504.8,742.4 L490.3,742.6 L475.7,742.5 L461.1,741.9 L446.6,741.1 L432.1,740.4 L417.5,739.7 L403.0,738.9 L388.4,738.0 L373.9,736.9 L359.4,735.5 L344.9,733.9 L330.5,731.8 L316.2,729.3 L301.9,726.5 L287.6,723.5 L273.4,720.2 L259.3,716.8 L245.1,713.2 L231.1,709.5 L217.0,705.6 L203.0,701.6 L189.0,697.5 L175.1,693.2 L161.2,688.8 L147.4,684.2 L133.6,679.6 L119.8,674.9 L106.0,670.1 L92.3,665.3 L78.5,660.5 L64.8,655.7 L51.0,651.0 Z" fill="url(#fc6)"/><path d="M51.0,642.0 L64.7,646.8 L78.3,651.6 L91.9,656.5 L105.6,661.3 L119.2,666.0 L133.0,670.7 L146.7,675.2 L160.5,679.6 L174.3,683.8 L188.2,687.8 L202.2,691.7 L216.1,695.5 L230.1,699.1 L244.2,702.7 L258.2,706.1 L272.3,709.4 L286.4,712.6 L300.6,715.6 L314.8,718.4 L329.0,721.1 L343.3,723.4 L357.6,725.4 L371.9,727.2 L386.3,728.8 L400.7,730.2 L415.1,731.5 L429.5,732.6 L443.9,733.8 L458.4,734.9 L472.8,735.7 L487.3,736.0 L501.7,735.6 L516.2,735.2 L530.7,734.5 L545.1,733.5 L559.5,732.1 L573.9,730.4 L587.9,727.3 L600.7,721.5 L612.6,714.7 L612.6,714.7 L602.9,725.5 L591.5,734.5 L577.5,738.4 L563.0,739.7 L548.5,740.9 L533.9,741.6 L519.4,742.1 L504.8,742.4 L490.3,742.6 L475.7,742.5 L461.1,741.9 L446.6,741.1 L432.1,740.4 L417.5,739.7 L403.0,738.9 L388.4,738.0 L373.9,736.9 L359.4,735.5 L344.9,733.9 L330.5,731.8 L316.2,729.3 L301.9,726.5 L287.6,723.5 L273.4,720.2 L259.3,716.8 L245.1,713.2 L231.1,709.5 L217.0,705.6 L203.0,701.6 L189.0,697.5 L175.1,693.2 L161.2,688.8 L147.4,684.2 L133.6,679.6 L119.8,674.9 L106.0,670.1 L92.3,665.3 L78.5,660.5 L64.8,655.7 L51.0,651.0 Z" fill="url(#fc7)"/><path d="M51.0,643.3 L64.7,648.1 L78.3,652.9 L92.0,657.7 L105.6,662.5 L119.3,667.3 L133.0,671.9 L146.8,676.5 L160.6,680.9 L174.4,685.2 L188.3,689.2 L202.3,693.1 L216.3,696.9 L230.3,700.6 L244.3,704.2 L258.4,707.6 L272.5,710.9 L286.6,714.1 L300.8,717.1 L315.0,720.0 L329.2,722.6 L343.5,724.9 L357.8,726.9 L372.2,728.6 L386.6,730.1 L401.0,731.4 L415.4,732.6 L429.9,733.7 L444.3,734.8 L458.8,735.9 L473.2,736.7 L487.7,736.9 L502.2,736.6 L516.7,736.2 L531.1,735.5 L545.6,734.5 L560.0,733.2 L574.4,731.6 L588.4,728.3 L601.0,722.0 L612.6,714.7 L612.6,714.7 L602.9,725.5 L591.5,734.5 L577.5,738.4 L563.0,739.7 L548.5,740.9 L533.9,741.6 L519.4,742.1 L504.8,742.4 L490.3,742.6 L475.7,742.5 L461.1,741.9 L446.6,741.1 L432.1,740.4 L417.5,739.7 L403.0,738.9 L388.4,738.0 L373.9,736.9 L359.4,735.5 L344.9,733.9 L330.5,731.8 L316.2,729.3 L301.9,726.5 L287.6,723.5 L273.4,720.2 L259.3,716.8 L245.1,713.2 L231.1,709.5 L217.0,705.6 L203.0,701.6 L189.0,697.5 L175.1,693.2 L161.2,688.8 L147.4,684.2 L133.6,679.6 L119.8,674.9 L106.0,670.1 L92.3,665.3 L78.5,660.5 L64.8,655.7 L51.0,651.0 Z" fill="url(#fc8)"/><path d="M51.0,644.6 L64.7,649.3 L78.4,654.2 L92.0,659.0 L105.7,663.8 L119.4,668.5 L133.1,673.2 L146.9,677.8 L160.7,682.2 L174.5,686.5 L188.5,690.6 L202.4,694.5 L216.4,698.3 L230.4,702.1 L244.4,705.7 L258.5,709.1 L272.6,712.5 L286.8,715.7 L300.9,718.7 L315.2,721.5 L329.4,724.1 L343.7,726.4 L358.1,728.3 L372.5,730.0 L386.9,731.4 L401.3,732.7 L415.8,733.8 L430.2,734.8 L444.7,735.9 L459.2,736.9 L473.6,737.7 L488.1,737.9 L502.6,737.6 L517.1,737.2 L531.6,736.5 L546.1,735.6 L560.5,734.3 L574.9,732.7 L589.0,729.4 L601.3,722.6 L612.6,714.7 L612.6,714.7 L602.9,725.5 L591.5,734.5 L577.5,738.4 L563.0,739.7 L548.5,740.9 L533.9,741.6 L519.4,742.1 L504.8,742.4 L490.3,742.6 L475.7,742.5 L461.1,741.9 L446.6,741.1 L432.1,740.4 L417.5,739.7 L403.0,738.9 L388.4,738.0 L373.9,736.9 L359.4,735.5 L344.9,733.9 L330.5,731.8 L316.2,729.3 L301.9,726.5 L287.6,723.5 L273.4,720.2 L259.3,716.8 L245.1,713.2 L231.1,709.5 L217.0,705.6 L203.0,701.6 L189.0,697.5 L175.1,693.2 L161.2,688.8 L147.4,684.2 L133.6,679.6 L119.8,674.9 L106.0,670.1 L92.3,665.3 L78.5,660.5 L64.8,655.7 L51.0,651.0 Z" fill="url(#fc9)"/><path d="M51.0,645.9 L64.7,650.6 L78.4,655.4 L92.1,660.3 L105.8,665.1 L119.5,669.8 L133.2,674.5 L147.0,679.0 L160.8,683.5 L174.7,687.8 L188.6,692.0 L202.5,695.9 L216.5,699.8 L230.5,703.5 L244.6,707.2 L258.7,710.7 L272.8,714.0 L286.9,717.2 L301.1,720.3 L315.4,723.1 L329.6,725.7 L344.0,727.9 L358.4,729.8 L372.8,731.4 L387.2,732.7 L401.7,733.9 L416.1,735.0 L430.6,735.9 L445.1,736.9 L459.6,737.9 L474.0,738.6 L488.6,738.8 L503.1,738.5 L517.6,738.1 L532.1,737.5 L546.5,736.6 L561.0,735.4 L575.4,733.8 L589.5,730.4 L601.6,723.2 L612.6,714.7 L612.6,714.7 L602.9,725.5 L591.5,734.5 L577.5,738.4 L563.0,739.7 L548.5,740.9 L533.9,741.6 L519.4,742.1 L504.8,742.4 L490.3,742.6 L475.7,742.5 L461.1,741.9 L446.6,741.1 L432.1,740.4 L417.5,739.7 L403.0,738.9 L388.4,738.0 L373.9,736.9 L359.4,735.5 L344.9,733.9 L330.5,731.8 L316.2,729.3 L301.9,726.5 L287.6,723.5 L273.4,720.2 L259.3,716.8 L245.1,713.2 L231.1,709.5 L217.0,705.6 L203.0,701.6 L189.0,697.5 L175.1,693.2 L161.2,688.8 L147.4,684.2 L133.6,679.6 L119.8,674.9 L106.0,670.1 L92.3,665.3 L78.5,660.5 L64.8,655.7 L51.0,651.0 Z" fill="url(#fc10)"/><path d="M51.0,647.1 L64.7,651.9 L78.4,656.7 L92.1,661.5 L105.8,666.3 L119.6,671.1 L133.3,675.8 L147.1,680.3 L160.9,684.8 L174.8,689.2 L188.7,693.3 L202.6,697.3 L216.6,701.2 L230.7,705.0 L244.7,708.7 L258.8,712.2 L272.9,715.6 L287.1,718.8 L301.3,721.8 L315.6,724.6 L329.9,727.2 L344.2,729.4 L358.6,731.2 L373.1,732.7 L387.5,734.0 L402.0,735.2 L416.5,736.2 L431.0,737.1 L445.5,738.0 L460.0,738.9 L474.5,739.6 L489.0,739.8 L503.5,739.5 L518.0,739.1 L532.5,738.6 L547.0,737.7 L561.5,736.5 L576.0,735.0 L590.0,731.4 L601.9,723.8 L612.6,714.7 L612.6,714.7 L602.9,725.5 L591.5,734.5 L577.5,738.4 L563.0,739.7 L548.5,740.9 L533.9,741.6 L519.4,742.1 L504.8,742.4 L490.3,742.6 L475.7,742.5 L461.1,741.9 L446.6,741.1 L432.1,740.4 L417.5,739.7 L403.0,738.9 L388.4,738.0 L373.9,736.9 L359.4,735.5 L344.9,733.9 L330.5,731.8 L316.2,729.3 L301.9,726.5 L287.6,723.5 L273.4,720.2 L259.3,716.8 L245.1,713.2 L231.1,709.5 L217.0,705.6 L203.0,701.6 L189.0,697.5 L175.1,693.2 L161.2,688.8 L147.4,684.2 L133.6,679.6 L119.8,674.9 L106.0,670.1 L92.3,665.3 L78.5,660.5 L64.8,655.7 L51.0,651.0 Z" fill="url(#fc11)"/><path d="M51.0,648.4 L64.7,653.2 L78.5,658.0 L92.2,662.8 L105.9,667.6 L119.6,672.3 L133.4,677.0 L147.2,681.6 L161.0,686.1 L174.9,690.5 L188.8,694.7 L202.8,698.8 L216.8,702.7 L230.8,706.5 L244.9,710.2 L259.0,713.7 L273.1,717.1 L287.3,720.4 L301.5,723.4 L315.8,726.2 L330.1,728.7 L344.4,730.9 L358.9,732.6 L373.3,734.1 L387.8,735.3 L402.3,736.4 L416.8,737.3 L431.3,738.2 L445.8,739.0 L460.4,739.9 L474.9,740.6 L489.4,740.7 L503.9,740.5 L518.5,740.1 L533.0,739.6 L547.5,738.7 L562.0,737.6 L576.5,736.1 L590.5,732.5 L602.2,724.4 L612.6,714.7 L612.6,714.7 L602.9,725.5 L591.5,734.5 L577.5,738.4 L563.0,739.7 L548.5,740.9 L533.9,741.6 L519.4,742.1 L504.8,742.4 L490.3,742.6 L475.7,742.5 L461.1,741.9 L446.6,741.1 L432.1,740.4 L417.5,739.7 L403.0,738.9 L388.4,738.0 L373.9,736.9 L359.4,735.5 L344.9,733.9 L330.5,731.8 L316.2,729.3 L301.9,726.5 L287.6,723.5 L273.4,720.2 L259.3,716.8 L245.1,713.2 L231.1,709.5 L217.0,705.6 L203.0,701.6 L189.0,697.5 L175.1,693.2 L161.2,688.8 L147.4,684.2 L133.6,679.6 L119.8,674.9 L106.0,670.1 L92.3,665.3 L78.5,660.5 L64.8,655.7 L51.0,651.0 Z" fill="url(#fc12)"/><path d="M51.0,649.7 L64.8,654.5 L78.5,659.3 L92.2,664.1 L106.0,668.9 L119.7,673.6 L133.5,678.3 L147.3,682.9 L161.1,687.5 L175.0,691.9 L188.9,696.1 L202.9,700.2 L216.9,704.1 L230.9,708.0 L245.0,711.7 L259.1,715.3 L273.3,718.7 L287.4,721.9 L301.7,725.0 L316.0,727.8 L330.3,730.3 L344.7,732.4 L359.1,734.1 L373.6,735.5 L388.1,736.7 L402.6,737.6 L417.2,738.5 L431.7,739.3 L446.2,740.1 L460.7,740.9 L475.3,741.6 L489.8,741.7 L504.4,741.4 L518.9,741.1 L533.5,740.6 L548.0,739.8 L562.5,738.7 L577.0,737.3 L591.0,733.5 L602.5,724.9 L612.6,714.7 L612.6,714.7 L602.9,725.5 L591.5,734.5 L577.5,738.4 L563.0,739.7 L548.5,740.9 L533.9,741.6 L519.4,742.1 L504.8,742.4 L490.3,742.6 L475.7,742.5 L461.1,741.9 L446.6,741.1 L432.1,740.4 L417.5,739.7 L403.0,738.9 L388.4,738.0 L373.9,736.9 L359.4,735.5 L344.9,733.9 L330.5,731.8 L316.2,729.3 L301.9,726.5 L287.6,723.5 L273.4,720.2 L259.3,716.8 L245.1,713.2 L231.1,709.5 L217.0,705.6 L203.0,701.6 L189.0,697.5 L175.1,693.2 L161.2,688.8 L147.4,684.2 L133.6,679.6 L119.8,674.9 L106.0,670.1 L92.3,665.3 L78.5,660.5 L64.8,655.7 L51.0,651.0 Z" fill="url(#fc13)"/>
<path d="M51,497.8 L238.7,561 L372,591 C420,600 460,604 491.6,603.7 C530,603 570,600 594.2,597.6 C610,602 620,610 626,620 C632,628 636,636 636.3,645 L612.6,714.7" fill="none" stroke="#000" stroke-width="1"/>
<path d="M51,551 L225,609 L372,643 C420,650 460,654 502,654.7 C540,655 590,650 636.3,645" fill="none" stroke="#000" stroke-width="1"/>
<path d="M612.6,714.7 C603.8,716.2 577.6,721.7 560.0,724.0 C542.4,726.3 525.0,727.9 507.0,728.5 C489.0,729.1 481.5,730.5 452.0,727.5 C422.5,724.5 376.5,719.7 329.8,710.8 C283.1,701.9 218.5,687.0 172.0,674.0 C125.5,661.0 71.2,639.8 51.0,633.0" fill="none" stroke="#000" stroke-width="1"/>
<line x1="239.8" y1="561" x2="196.4" y2="699.7" stroke="#000" stroke-width="1"/>
<!-- upper plate band -->
<path d="M51,403.3 L372,510 L552.2,574.8 L684,617.8 C715,624 750,623 770,614 C790,606 800,600 808,592 C802,612 788,628 760,637 C740,641 715,641 680,633 L629,618 C618,608 607,600 595.6,597.8 L553.6,582.3 L372,521 L51,413.3 Z" fill="url(#gBand2)"/>
<path d="M51,403.3 L372,510 L552.2,574.8" fill="none" stroke="#000"/>
<path d="M553.6,582.3 L372,521 L51,413.3" fill="none" stroke="#000"/>
<path d="M808,592 C802,612 788,628 760,637 C740,641 715,641 680,633 L629,618 C618,608 607,600 595.6,597.8 L553.6,582.3" fill="none" stroke="#000"/>
<line x1="684" y1="618" x2="680" y2="633" stroke="#000"/>
<!-- upper plate top face -->
<path d="M51,387.3 L372,494.4 L534,549 L560,552 L603,440 L584.4,405 L611.7,414.4 L602,446 L738,491 C765,500 790,520 805,545 C813,560 814,578 808,592 C800,600 790,606 770,614 C750,623 715,624 684,617.8 L552.2,574.8 L372,510 L51,403.3 Z" fill="#7ef6fe"/>
<path d="M602,446 L738,491 C765,500 790,520 805,545 C813,560 814,578 808,592 C800,600 790,606 770,614 C750,623 715,624 684,617.8 L552.2,574.8" fill="none" stroke="#000"/>
<!-- wedge dark face -->
<path d="M0,51 L6,51 L240,252 L290,295 L320,319 L473,444 L483,451 L534,549 L372,494.4 L51,387.3 L0,370 Z" fill="url(#gDark)"/>
<path d="M534,549 L372,494.4 L51,387.3" fill="none" stroke="#000"/>
<!-- wedge ridge fillet -->
<path d="M6,51 L240,252 L290,295 L320,319 L473,444 L483,451 L500.6,435 L320,289 L275,252 L43,51 Z" fill="url(#gRidge)"/>
<!-- vertical fillet -->
<path d="M483,451 L534,549 C540,552 550,553 557.7,552 L560.4,548 L532,497 L500.6,435 Z" fill="url(#gFrontFil)"/>
<!-- wedge top face -->
<path d="M43,51 L275,252 L320,289 L500.6,435 L539,327 L433,249.1 L326.7,172 L160,51 Z" fill="#6dd5fc"/>
<!-- front face -->
<path d="M500.6,435 L539,327 L602,437 L599,440 L560,548 L532,497 Z" fill="#55a3d3"/><path d="M598.5,439.5 L603.5,439.5 L552,582 L547.5,580.5 Z" fill="#2f5f7d"/>
<!-- sliver -->
<path d="M584.4,405 L611.7,414.4 L603,440 L602,437 Z" fill="#80f6fe"/>
<!-- edges -->
<g fill="none" stroke="#000" stroke-width="1.1">
<path d="M160,51 L326.7,172 L433,249.1 L539,327 L602,437"/>
<path d="M43,51 L275,252 L320,289 L500.6,435 L539,327"/>
<path d="M6,51 L240,252 L290,295 L320,319 L473,444 L483,451 L534,549"/>
<path d="M483,451 L500.6,435 L532,497 L560.4,548"/>
<path d="M584.4,405 L611.7,414.4 L602,442"/>
<path d="M603,440 L551.5,581.6"/>
<path d="M599,440 L548.5,580.6"/>
</g>
<defs><linearGradient id="gBase" gradientUnits="userSpaceOnUse" x1="650" y1="485" x2="715" y2="600">
<stop offset="0" stop-color="#c8f4ec"/><stop offset="0.35" stop-color="#b4f8ea"/><stop offset="0.6" stop-color="#9cf8e0"/><stop offset="1" stop-color="#84f4cc"/></linearGradient>
<linearGradient id="gCap" gradientUnits="userSpaceOnUse" x1="640" y1="500" x2="740" y2="570">
<stop offset="0" stop-color="#a4fcfc"/><stop offset="1" stop-color="#a0fcf4"/></linearGradient></defs>
<path d="M765.7,562.7 L764.4,566.2 L762.8,569.6 L760.8,572.8 L758.4,575.8 L755.7,578.7 L752.6,581.4 L749.1,583.8 L745.4,586.1 L741.3,588.1 L736.9,589.9 L732.3,591.4 L727.5,592.7 L722.4,593.7 L717.1,594.5 L711.7,595.0 L706.1,595.2 L700.4,595.1 L694.7,594.8 L688.8,594.2 L683.0,593.3 L677.1,592.1 L671.3,590.7 L665.5,589.1 L659.8,587.2 L654.3,585.1 L648.8,582.7 L643.6,580.1 L638.5,577.4 L633.6,574.4 L629.0,571.3 L624.7,568.0 L620.6,564.6 L616.8,561.0 L613.4,557.3 L610.3,553.6 L607.5,549.8 L605.2,545.9 L603.1,542.0 L601.5,538.1 L600.3,534.1 L599.5,530.3 L599.1,526.4 L599.1,522.6 L599.5,518.9 L600.3,515.3 L601.6,511.8 L603.2,508.4 L605.2,505.2 L607.6,502.2 L610.3,499.3 L613.4,496.6 L616.9,494.2 L620.6,491.9 L624.7,489.9 L629.1,488.1 L633.7,486.6 L638.5,485.3 L643.6,484.3 L648.9,483.5 L654.3,483.0 L659.9,482.8 L665.6,482.9 L671.3,483.2 L677.2,483.8 L683.0,484.7 L688.9,485.9 L694.7,487.3 L700.5,488.9 L706.2,490.8 L711.7,492.9 L717.2,495.3 L722.4,497.9 L727.5,500.6 L732.4,503.6 L737.0,506.7 L741.3,510.0 L745.4,513.4 L749.2,517.0 L752.6,520.7 L755.7,524.4 L758.5,528.2 L760.8,532.1 L762.9,536.0 L764.5,539.9 L765.7,543.9 L766.5,547.7 L766.9,551.6 L766.9,555.4 L766.5,559.1 L765.7,562.7 Z" fill="url(#gBase)"/>
<path d="M758.6,548.2 L757.8,550.3 L756.7,552.2 L755.2,554.0 L753.4,555.7 L751.3,557.2 L748.8,558.6 L746.1,559.9 L743.1,561.0 L739.8,561.9 L736.3,562.6 L732.5,563.2 L728.5,563.6 L724.3,563.8 L720.0,563.9 L715.4,563.7 L710.8,563.4 L706.0,562.9 L701.2,562.2 L696.2,561.4 L691.3,560.4 L686.3,559.2 L681.3,557.9 L676.4,556.4 L671.5,554.8 L666.7,553.1 L662.0,551.2 L657.4,549.2 L653.0,547.1 L648.7,544.9 L644.6,542.6 L640.8,540.2 L637.1,537.8 L633.7,535.3 L630.6,532.8 L627.8,530.3 L625.2,527.7 L623.0,525.1 L621.1,522.6 L619.5,520.1 L618.2,517.6 L617.3,515.1 L616.7,512.7 L616.4,510.4 L616.5,508.1 L617.0,506.0 L617.8,503.9 L618.9,502.0 L620.4,500.2 L622.2,498.5 L624.3,497.0 L626.8,495.6 L629.5,494.3 L632.5,493.2 L635.8,492.3 L639.3,491.6 L643.1,491.0 L647.1,490.6 L651.3,490.4 L655.6,490.3 L660.2,490.5 L664.8,490.8 L669.6,491.3 L674.4,492.0 L679.4,492.8 L684.3,493.8 L689.3,495.0 L694.3,496.3 L699.2,497.8 L704.1,499.4 L708.9,501.1 L713.6,503.0 L718.2,505.0 L722.6,507.1 L726.9,509.3 L731.0,511.6 L734.8,514.0 L738.5,516.4 L741.9,518.9 L745.0,521.4 L747.8,523.9 L750.4,526.5 L752.6,529.1 L754.5,531.6 L756.1,534.1 L757.4,536.6 L758.3,539.1 L758.9,541.5 L759.2,543.8 L759.1,546.1 L758.6,548.2 Z" fill="url(#gCap)"/>
<path d="M604.1,506.8 L605.5,504.7 L607.1,502.7 L608.9,500.7 L610.8,498.8 L612.9,497.1 L615.1,495.4 L617.5,493.8 L620.0,492.3 L622.6,490.9 L625.4,489.6 L628.3,488.4 L631.3,487.3 L634.5,486.3 L637.7,485.5 L641.1,484.7 L644.5,484.1 L648.0,483.6 L651.6,483.2 L655.2,483.0 L659.0,482.8 L662.7,482.8 L666.5,482.9 L670.4,483.1 L674.3,483.5 L678.2,484.0 L682.1,484.5 L686.0,485.2 L689.9,486.1 L693.7,487.0 L697.6,488.1 L701.4,489.2 L705.2,490.5 L709.0,491.8 L712.7,493.3 L716.3,494.9 L719.8,496.6 L723.3,498.3 L726.7,500.2 L730.0,502.1 L733.2,504.1 L736.2,506.2 L739.2,508.4 L742.0,510.6 L744.8,512.9 L747.3,515.2 L749.8,517.6 L752.1,520.0 L754.2,522.5 L756.2,525.0 L758.0,527.6 L759.7,530.2 L761.2,532.8 L762.5,535.4 L763.7,538.0 L764.7,540.6 L765.5,543.2 L766.1,545.8 L766.6,548.4 L766.9,551.0 L766.9,553.5" fill="none" stroke="#d4fc98" stroke-width="1.2"/>
<path d="M767.8,556.8 L766.7,558.8 L765.4,560.8 L764.0,562.7 L762.3,564.4 L760.5,566.1 L758.5,567.8 L756.3,569.3 L754.0,570.7 L751.5,572.0 L748.8,573.2 L746.0,574.3 L743.1,575.3 L740.1,576.1 L736.9,576.9 L733.6,577.5 L730.2,578.0 L726.7,578.4 L723.1,578.6 L719.5,578.7 L715.7,578.7 L712.0,578.6 L708.1,578.4 L704.2,578.0 L700.3,577.5 L696.4,576.9 L692.4,576.2 L688.5,575.3 L684.6,574.4 L680.7,573.3 L676.8,572.1 L672.9,570.8 L669.1,569.4 L665.4,567.9 L661.7,566.3 L658.1,564.6 L654.6,562.8 L651.2,560.9 L647.9,559.0 L644.7,557.0 L641.6,554.9 L638.6,552.7 L635.8,550.5 L633.1,548.2 L630.6,545.9 L628.2,543.6 L626.0,541.2 L624.0,538.8 L622.1,536.3 L620.4,533.8 L618.9,531.4 L617.5,528.9 L616.4,526.4 L615.5,523.9 L614.7,521.5 L614.1,519.1 L613.8,516.6 L613.6,514.3 L613.7,511.9 L613.9,509.6 L614.3,507.4" fill="none" stroke="#e0fc98" stroke-width="1"/>
<path d="M758.6,548.2 L758.0,549.8 L757.2,551.3 L756.3,552.8 L755.1,554.2 L753.7,555.5 L752.1,556.7 L750.4,557.8 L748.4,558.8 L746.3,559.8 L744.0,560.7 L741.6,561.4 L739.0,562.1 L736.2,562.6 L733.3,563.1 L730.3,563.4 L727.1,563.7 L723.9,563.8 L720.5,563.9 L717.1,563.8 L713.5,563.6 L709.9,563.3 L706.2,562.9 L702.5,562.4 L698.7,561.8 L694.9,561.1 L691.1,560.4 L687.2,559.5 L683.4,558.5 L679.6,557.4 L675.7,556.2 L672.0,555.0 L668.3,553.7 L664.6,552.3 L661.0,550.8 L657.5,549.2 L654.0,547.6 L650.7,546.0 L647.5,544.2 L644.4,542.5 L641.4,540.6 L638.5,538.8 L635.8,536.9 L633.3,535.0 L630.9,533.0 L628.6,531.1 L626.6,529.1 L624.7,527.1 L623.0,525.1 L621.5,523.2 L620.1,521.2 L619.0,519.3 L618.1,517.3 L617.4,515.5 L616.8,513.6 L616.5,511.8 L616.4,510.0 L616.5,508.3 L616.8,506.6 L617.3,505.0 L618.0,503.4" fill="none" stroke="#d8fc90" stroke-width="1.2"/>
<path d="M619.6,501.1 L620.7,499.8 L622.0,498.6 L623.5,497.5 L625.1,496.5 L626.9,495.5 L628.8,494.6 L630.8,493.8 L633.0,493.1 L635.4,492.4 L637.8,491.9 L640.4,491.4 L643.1,491.0 L645.9,490.7 L648.8,490.5 L651.8,490.4 L654.9,490.3 L658.1,490.4 L661.3,490.5 L664.6,490.8 L668.0,491.1 L671.4,491.5 L674.9,492.0 L678.3,492.6 L681.9,493.3 L685.4,494.0 L688.9,494.9 L692.4,495.8 L695.9,496.8 L699.4,497.8 L702.9,499.0 L706.3,500.2 L709.7,501.4 L713.1,502.8 L716.3,504.2 L719.5,505.6 L722.6,507.1 L725.7,508.7 L728.6,510.3 L731.5,511.9 L734.2,513.6 L736.8,515.3 L739.3,517.0 L741.7,518.8 L744.0,520.5 L746.1,522.3 L748.0,524.1 L749.9,526.0 L751.5,527.8 L753.0,529.6 L754.4,531.4 L755.6,533.2 L756.6,535.0 L757.5,536.8 L758.1,538.5 L758.7,540.2 L759.0,541.9 L759.2,543.5 L759.2,545.1 L759.0,546.7 L758.6,548.2" fill="none" stroke="#7a7a78" stroke-width="1.8"/>
<path d="M766.9,551.6 L766.9,554.3 L766.8,556.9 L766.4,559.5 L765.9,562.0 L765.1,564.5 L764.2,566.9 L763.0,569.2 L761.7,571.5 L760.1,573.7 L758.4,575.8 L756.6,577.9 L754.5,579.8 L752.2,581.6 L749.8,583.4 L747.3,585.0 L744.6,586.5 L741.7,587.9 L738.7,589.2 L735.6,590.4 L732.3,591.4 L728.9,592.4 L725.5,593.2 L721.9,593.8 L718.2,594.4 L714.4,594.8 L710.6,595.0 L706.7,595.2 L702.7,595.2 L698.7,595.0 L694.7,594.8 L690.6,594.4 L686.5,593.8 L682.4,593.2 L678.3,592.4 L674.2,591.5 L670.1,590.4 L666.1,589.3 L662.1,588.0 L658.1,586.6 L654.3,585.1 L650.4,583.4 L646.7,581.7 L643.0,579.9 L639.5,577.9 L636.0,575.9 L632.7,573.8 L629.5,571.6 L626.4,569.3 L623.4,567.0 L620.6,564.6 L617.9,562.1 L615.4,559.5 L613.1,557.0 L610.9,554.3 L608.9,551.7 L607.0,549.0 L605.4,546.3 L603.9,543.6 L602.6,540.8 L601.5,538.1 L600.6,535.3 L599.9,532.6 L599.4,529.9 L599.1,527.2 L599.1,524.5 L599.2,521.9 L599.5,519.3 L600.0,516.7 L600.7,514.2 L601.6,511.8 L602.6,509.4 L603.9,507.1 L605.4,504.9 L607.1,502.8 L608.9,500.7 L610.9,498.7 L613.1,496.9 L615.4,495.1 L618.0,493.5 L620.6,491.9" fill="none" stroke="#262626" stroke-width="1.6"/>
<circle cx="683" cy="541" r="0.8" fill="#883"/>
<g stroke="#111" stroke-width="1" fill="none">
<path d="M746.4,503.2 L765.7,572.9"/><path d="M784.9,510.4 L767.3,564.9"/>
<path d="M772,552.9 L863.4,586.5"/><path d="M765.7,575.3 L844.1,604.1"/>
</g>
<defs><linearGradient id="gCone" x1="0" y1="0" x2="0" y2="1"><stop offset="0" stop-color="#e84a2a"/><stop offset="0.45" stop-color="#fff0e0"/><stop offset="0.7" stop-color="#e85030"/><stop offset="1" stop-color="#a02810"/></linearGradient></defs>
<path d="M746.4,509.6 L726,504.5 C723,508 723,514 726,517 Z" fill="url(#gCone)"/>
<path d="M772.9,512 L786.5,508.8 L781.7,522.4 Z" fill="#7a12c8"/>
<text x="757" y="515" font-family="Liberation Serif" font-size="12" fill="#444">-20</text>
<path d="M858.6,564.1 L869,568 L857.7,584.1 Z" fill="#c83c22"/>
<text x="845" y="601" font-family="Liberation Serif" font-size="12" fill="#555">1. 5</text>
<path d="M844.1,606.5 L853,598.5 L856.1,609.7 Z" fill="#a6fafa"/><path d="M853,598.5 L856.1,609.7 L852,608 Z" fill="#1a5a5a"/>
<text x="630" y="447" font-family="Liberation Serif" font-style="italic" font-weight="bold" font-size="30" fill="#f2f2f2" textLength="182" lengthAdjust="spacingAndGlyphs">i3DOne.com</text>
<text x="629" y="446" font-family="Liberation Serif" font-style="italic" font-weight="bold" font-size="30" fill="#dadada" textLength="182" lengthAdjust="spacingAndGlyphs">i3DOne.com</text>


</g>
</svg>
<!-- TITLE BAR -->
<svg class="abs" style="left:0;top:0" width="1440" height="51" viewBox="0 0 1440 51">
<defs>
<linearGradient id="tL" x1="0" y1="0" x2="0" y2="1"><stop offset="0" stop-color="#525256"/><stop offset="1" stop-color="#38383b"/></linearGradient>
<linearGradient id="tM" x1="0" y1="0" x2="0" y2="1"><stop offset="0" stop-color="#404044"/><stop offset="1" stop-color="#29292b"/></linearGradient>
<linearGradient id="tS" x1="0" y1="0" x2="0" y2="1"><stop offset="0" stop-color="#3c3c3f"/><stop offset="1" stop-color="#2c2c2e"/></linearGradient>
<linearGradient id="lg3d" x1="0" y1="0" x2="1" y2="0"><stop offset="0" stop-color="#1f7fe6"/><stop offset="1" stop-color="#1cc0f4"/></linearGradient>
</defs>
<rect x="0" y="0" width="1440" height="51" fill="url(#tL)"/>
<path d="M216,0 C245,16 262,30 280,38 C290,43 296,44 305,44 L1180,44 C1192,44 1198,36 1223,0 Z" fill="url(#tM)"/>
<path d="M216,0 C245,16 262,30 280,38 C290,43 296,44 305,44 L1180,44 C1192,44 1198,36 1223,0" fill="none" stroke="#5c5c60" stroke-width="1"/>
<rect x="0" y="44" width="1440" height="7" fill="url(#tS)"/>
<line x1="1082" y1="0.5" x2="1360" y2="0.5" stroke="#858a90" stroke-width="1"/>
<!-- paper plane -->
<path d="M3,19 L45,11 L17,25 Z" fill="#e8eef4"/>
<path d="M17,25 L45,11 L30,42 Z" fill="#f4f8fc"/>
<path d="M12,22 L17,25 L15,36 Z" fill="#8898aa"/>
<path d="M17,25 L45,11 L20,30 Z" fill="#a6b6c8"/>
<text x="53" y="36" font-family="Liberation Sans" font-weight="bold" font-style="italic" font-size="29" fill="url(#lg3d)" textLength="122" lengthAdjust="spacingAndGlyphs">3DOne</text>
<!-- save -->
<path d="M309,9 L329,9 L333,13 L333,33 L309,33 Z" fill="#a9a9a9"/>
<rect x="314" y="10" width="12" height="7" fill="#3a3a3c"/><rect x="321" y="11" width="3" height="4" fill="#a9a9a9"/>
<rect x="312" y="22" width="18" height="9" fill="#3a3a3c"/>
<rect x="315" y="24" width="12" height="1.3" fill="#a9a9a9"/><rect x="315" y="27" width="12" height="1.3" fill="#a9a9a9"/>
<!-- undo -->
<path d="M352,17 L362,9 L362,14 C371,14 376,20 374,28 C373,31 371,33 370,33 C371,27 368,21 362,21 L362,25 Z" fill="#a7a7a7"/>
<!-- redo -->
<path d="M416,17 L406,9 L406,14 C397,14 392,20 394,28 C395,31 397,33 398,33 C397,27 400,21 406,21 L406,25 Z" fill="#cac9bc"/>
<text x="720" y="27" text-anchor="middle" font-family="Liberation Sans" font-size="16" fill="#e6e6e6">家庭版 - [阿帕奇.Z1]</text>
<text x="1267" y="32" text-anchor="middle" font-family="Liberation Sans" font-weight="bold" font-size="29" fill="#dcdcdc">?</text>
<line x1="1294" y1="1" x2="1294" y2="46" stroke="#222" stroke-width="1"/>
<line x1="1295" y1="1" x2="1295" y2="46" stroke="#4a4a4e" stroke-width="1"/>
<g>
<circle cx="1331" cy="22" r="15.5" fill="#9a9a9c"/><circle cx="1331" cy="21" r="15" fill="#1e1e1f"/><circle cx="1331" cy="21" r="11.5" fill="#5aa70a"/>
<rect x="1323" y="19.5" width="16" height="3" fill="#f4f4f4"/>
<circle cx="1372.5" cy="22" r="15.5" fill="#9a9a9c"/><circle cx="1372.5" cy="21" r="15" fill="#1e1e1f"/><circle cx="1372.5" cy="21" r="11.5" fill="#3b80ee"/>
<rect x="1368" y="15" width="9" height="9" rx="1.5" fill="none" stroke="#fff" stroke-width="1.4"/><rect x="1365" y="18" width="9" height="9" rx="1.5" fill="#3b80ee" stroke="#fff" stroke-width="1.4"/>
<circle cx="1413.8" cy="22" r="15.5" fill="#9a9a9c"/><circle cx="1413.8" cy="21" r="15" fill="#1e1e1f"/><circle cx="1413.8" cy="21" r="11.5" fill="#e23c30"/>
<path d="M1408,15 L1419.6,27 M1419.6,15 L1408,27" stroke="#fff" stroke-width="2.4"/>
</g>
</svg>

<!-- LEFT TOOLBAR -->
<svg class="abs" style="left:0;top:51px" width="52" height="767" viewBox="0 51 52 767">
<rect x="0" y="51" width="51" height="767" fill="#e6e6e6"/>
<line x1="50.5" y1="51" x2="50.5" y2="818" stroke="#f6f6f6"/><line x1="51.5" y1="51" x2="51.5" y2="818" stroke="#a6bfcc"/>
<defs><filter id="blr" x="-50%" y="-200%" width="200%" height="500%"><feGaussianBlur stdDeviation="1.6"/></filter></defs><g fill="#8c8c8c" opacity="0.6" filter="url(#blr)">
<ellipse cx="26" cy="89" rx="10" ry="2.5"/><ellipse cx="26" cy="138" rx="10" ry="2.5"/><ellipse cx="26" cy="186" rx="10" ry="2.5"/>
<ellipse cx="26" cy="235" rx="10" ry="2.5"/><ellipse cx="26" cy="284" rx="10" ry="2.5"/><ellipse cx="26" cy="332" rx="10" ry="2.5"/>
<ellipse cx="26" cy="382" rx="10" ry="2.5"/><ellipse cx="26" cy="431" rx="10" ry="2.5"/><ellipse cx="26" cy="480" rx="10" ry="2.5"/>
<ellipse cx="26" cy="529" rx="10" ry="2.5"/>
</g>
<g fill="#2f78cc">
<!-- 1 shapes -->
<circle cx="20" cy="78" r="5"/><rect x="21" y="69" width="8" height="14" rx="2"/><path d="M28,83 L31.5,70 L36,83 Z"/>
<!-- 2 pencil -->
<ellipse cx="22" cy="133" rx="5" ry="3" fill="none" stroke="#2f78cc" stroke-width="1.5"/><path d="M23,131 L33,117 L35,119 L25,133 Z"/>
<!-- 3 square -->
<path d="M17,166 L35,166 L35,177 C35,181 32,184 28,184 L17,184 Z" fill="none" stroke="#2f78cc" stroke-width="2"/>
<!-- 4 eraser -->
<path d="M16,228 L27,216 L36,221 L26,232 Z"/><path d="M19,225 L27,216 L31,219 L23,228 Z" fill="#dfeaf6"/>
<!-- 5 cube -->
<path d="M26,263 L35,267 L35,277 L26,281 L17,277 L17,267 Z"/><path d="M26,263 L35,267 L26,271 L17,267 Z" fill="#5a9ae0"/>
<!-- 6 move -->
<path d="M26,311 L30,315 L27.5,315 L27.5,319 L31,319 L31,316.5 L35,320.5 L31,324.5 L31,322 L27.5,322 L27.5,326 L30,326 L26,330 L22,326 L24.5,326 L24.5,322 L21,322 L21,324.5 L17,320.5 L21,316.5 L21,319 L24.5,319 L24.5,315 L22,315 Z"/>
<!-- 7 magnet -->
<path d="M17,377 L17,369 C17,358 35,358 35,369 L35,377 L31,377 L31,369 C31,363 21,363 21,369 L21,377 Z"/><rect x="17" y="373" width="4" height="4" fill="#222"/><rect x="31" y="373" width="4" height="4" fill="#222"/>
<!-- 8 box -->
<path d="M17,414 L26,410 L35,414 L35,424 L26,428 L17,424 Z"/><path d="M17,414 L26,410 L35,414 L26,418 Z" fill="#eaf2fa"/>
<!-- 9 ruler -->
<rect x="17" y="466" width="19" height="6"/><path d="M17,461 L17,465 M36,461 L36,465 M18,463 L35,463" stroke="#333" stroke-width="1"/>
<!-- 10 sphere -->
<circle cx="26" cy="516" r="9.5"/>
</g>
<circle cx="23" cy="512" r="4" fill="#8cc0f4" opacity="0.7"/>
</svg>

<!-- RIGHT STRIP -->
<div class="abs" style="left:1427px;top:51px;width:1px;height:767px;background:#6a6a6a"></div>
<div class="abs" style="left:1428px;top:51px;width:12px;height:767px;background:#efefef"></div>
<div class="abs" style="left:1428px;top:359px;width:12px;height:150px;background:#0499cb"></div>
<svg class="abs" style="left:1428px;top:426px" width="12" height="14"><path d="M3,7 L10,2 L10,12 Z" fill="#fff"/></svg>
<svg class="abs" style="left:1418px;top:697px" width="22" height="50" viewBox="1418 697 22 50">
<circle cx="1444" cy="722" r="24" fill="#b8b8b8"/><circle cx="1444" cy="722" r="23" fill="#f4f4f4"/><circle cx="1444" cy="722" r="21" fill="#d86a10"/><circle cx="1444" cy="722" r="20" fill="#f98e2e"/>
<text x="1427" y="726.5" font-family="Liberation Sans" font-weight="bold" font-size="12" fill="#fff">64</text>
</svg>

<!-- DIALOG -->
<div class="abs" style="left:52px;top:51px;width:275px;height:202px;background:#2e2e2e"></div><div class="abs" style="left:53px;top:52px;width:273px;height:200px;background:#9c9c9c"></div><div class="abs" style="left:54px;top:53px;width:271px;height:198px;background:#474747"></div>
<div class="abs" style="left:55px;top:90px;width:269px;height:160px;background:#f0f0f0"></div>
<svg class="abs" style="left:53px;top:52px" width="273" height="38" viewBox="53 52 273 38">
<defs>
<radialGradient id="gI" cx="0.45" cy="0.35" r="0.7"><stop offset="0" stop-color="#ffffff"/><stop offset="1" stop-color="#c8c8c8"/></radialGradient>
<radialGradient id="gR" cx="0.5" cy="0.3" r="0.7"><stop offset="0" stop-color="#f0604c"/><stop offset="1" stop-color="#d0342a"/></radialGradient>
<radialGradient id="gG" cx="0.5" cy="0.3" r="0.7"><stop offset="0" stop-color="#8cd03a"/><stop offset="1" stop-color="#4e9a10"/></radialGradient>
</defs>
<circle cx="73" cy="71.5" r="12.5" fill="url(#gI)"/>
<circle cx="73.5" cy="62.5" r="2" fill="#2a9ac8"/><path d="M70,66 L76,66 L76,79 L78,79 L78,81 L69,81 L69,79 L71,79 L71,68 L70,68 Z" fill="#2a9ac8"/>
<circle cx="269.7" cy="71.7" r="13.5" fill="url(#gR)"/>
<path d="M263.5,65.5 L276,78 M276,65.5 L263.5,78" stroke="#fff" stroke-width="2.2"/>
<circle cx="305.7" cy="71.5" r="13.5" fill="url(#gG)"/>
<path d="M298,71 L304,78 L316,62" fill="none" stroke="#fff" stroke-width="3"/>
</svg>
<svg class="abs" style="left:120px;top:98px" width="140" height="38" viewBox="120 98 140 38">
<defs>
<linearGradient id="bO" x1="0" y1="0" x2="0" y2="1"><stop offset="0" stop-color="#fdc47a"/><stop offset="0.5" stop-color="#f9a048"/><stop offset="1" stop-color="#f8901e"/></linearGradient>
<linearGradient id="bG" x1="0" y1="0" x2="0" y2="1"><stop offset="0" stop-color="#e6eaec"/><stop offset="0.5" stop-color="#dde2e4"/><stop offset="1" stop-color="#cfd6d8"/></linearGradient>
</defs>
<rect x="124.5" y="100.5" width="31" height="32" rx="2" fill="url(#bO)" stroke="#f0a030"/>
<rect x="157.5" y="100.5" width="31" height="32" rx="2" fill="url(#bG)" stroke="#b6bec2"/>
<rect x="190.5" y="100.5" width="31" height="32" rx="2" fill="url(#bG)" stroke="#b6bec2"/>
<rect x="223.5" y="100.5" width="31" height="32" rx="2" fill="url(#bG)" stroke="#b6bec2"/>
<g fill="#808080" opacity="0.35"><ellipse cx="140" cy="127" rx="11" ry="2.5"/><ellipse cx="173" cy="127" rx="11" ry="2.5"/><ellipse cx="206" cy="127" rx="11" ry="2.5"/><ellipse cx="239" cy="127" rx="11" ry="2.5"/></g>
<path d="M140,106 L149,115 L140,124 L131,115 Z" fill="#fff" stroke="#4a7ab8" stroke-width="0.8"/>
<path d="M167,110 L173,116 L167,122 L161,116 Z M179,110 L185,116 L179,122 L173,116 Z" fill="#fff" stroke="#4a7ab8" stroke-width="0.8"/>
<path d="M200,110 L206,116 L200,122 L194,116 Z" fill="#fff" stroke="#4a7ab8" stroke-width="0.8"/><path d="M212,110 L218,116 L212,122 L206,116 Z" fill="#5a9ae0"/>
<path d="M233,110 L239,116 L233,122 L227,116 Z M245,110 L251,116 L245,122 L239,116 Z" fill="#fff" stroke="#4a7ab8" stroke-width="0.8"/><path d="M239,113 L242,116 L239,119 L236,116 Z" fill="#2a6ac0"/>
</svg>
<div class="abs" style="left:66px;top:142px;font-size:12px;line-height:16px;color:#111">轮廓&nbsp;&nbsp;<span style="font-family:'Liberation Serif',serif">P</span></div>
<div class="abs" style="left:66px;top:169px;font-size:12px;line-height:16px;color:#111">拉伸类型</div>
<div class="abs" style="left:66px;top:197px;font-size:12px;line-height:16px;color:#111">方向</div>
<div class="abs" style="left:66px;top:227px;font-size:12px;line-height:16px;color:#111">子区域</div>
<div class="abs" style="left:133px;top:140px;width:179px;height:21px;border:1px solid #9c9c9c;background:#fafafa;font-size:12px;line-height:19px;padding-left:3px;color:#111;font-family:'Liberation Serif',serif">草图11</div>
<div class="abs" style="left:132px;top:168px;width:181px;height:20px;border:1px solid #9c9c9c;background:#fafafa;font-size:12px;line-height:18px;padding-left:2px;color:#111;font-family:'Liberation Serif',serif">1&nbsp;&nbsp;边</div>
<div class="abs" style="left:297px;top:169px;width:15px;height:18px;background:#c6c6c6"></div>
<svg class="abs" style="left:297px;top:169px" width="15" height="18"><path d="M4,7 L11,7 L7.5,11 Z" fill="#555"/></svg>
<div class="abs" style="left:133px;top:195px;width:134px;height:22px;border:1px solid #9c9c9c;background:#fafafa"></div>
<div class="abs" style="left:133px;top:225px;width:134px;height:22px;border:1px solid #9c9c9c;background:#fafafa"></div>
<svg class="abs" style="left:274px;top:195px" width="20" height="52" viewBox="274 195 20 52">
<g><path d="M281,198 L287,198 L287,203 L290,203 L284,211 L278,203 L281,203 Z" fill="#f0b020" stroke="#b08a20" stroke-width="0.8"/><line x1="278" y1="213.5" x2="291" y2="213.5" stroke="#9ab040" stroke-width="1.2"/></g>
<g transform="translate(0,30)"><path d="M281,198 L287,198 L287,203 L290,203 L284,211 L278,203 L281,203 Z" fill="#f0b020" stroke="#b08a20" stroke-width="0.8"/><line x1="278" y1="213.5" x2="291" y2="213.5" stroke="#9ab040" stroke-width="1.2"/></g>
</svg>

<!-- BOTTOM BAR -->
<div class="abs" style="left:51px;top:817px;width:1377px;height:1px;background:#eeeeee"></div><div class="abs" style="left:0;top:818px;width:1440px;height:1px;background:#5a5a5a"></div>
<div class="abs" style="left:0;top:819px;width:1440px;height:51px;background:#dce0e0;border-top:1px solid #e8ecec"></div>
<svg class="abs" style="left:0;top:818px" width="1440" height="56" viewBox="0 818 1440 56">
<defs><filter id="blr2" x="-50%" y="-200%" width="200%" height="500%"><feGaussianBlur stdDeviation="1.5"/></filter></defs><g opacity="0.6" fill="#7a7e80" filter="url(#blr2)"><ellipse cx="551" cy="853" rx="10" ry="2.5"/><ellipse cx="599" cy="853" rx="10" ry="2.5"/><ellipse cx="648" cy="853" rx="10" ry="2.5"/><ellipse cx="697" cy="853" rx="10" ry="2.5"/><ellipse cx="746" cy="853" rx="10" ry="2.5"/><ellipse cx="795" cy="853" rx="10" ry="2.5"/></g>
<path d="M542,834 L560,834 L560,850 L542,850 Z M550,834 L550,842 L560,842" fill="#fff" stroke="#2f78cc" stroke-width="1.6"/>
<path d="M588,841 C594,833 604,833 611,841 C604,848 594,848 588,841 Z" fill="#2f78cc"/><circle cx="599.5" cy="841" r="3.5" fill="#fff"/><circle cx="599.5" cy="841" r="1.8" fill="#2f78cc"/>
<path d="M648,833 L657,838 L657,847 L648,852 L639,847 L639,838 Z M639,838 L648,843 L657,838 M648,843 L648,852" fill="#f8fbff" stroke="#5a8ad0" stroke-width="1"/>
<path d="M688,839 L697,835 L708,838 L708,847 L699,851 L688,848 Z" fill="#8cb4e0"/><path d="M688,839 L697,835 L708,838 L699,842 Z" fill="#b4d0ee"/>
<circle cx="745" cy="840" r="6.5" fill="#fff" stroke="#2f78cc" stroke-width="2"/><path d="M749,845 L756,852" stroke="#2f78cc" stroke-width="3"/>
<path d="M789,836 L801,836 L801,840 L805,840 L805,848 L801,848 L801,851 L789,851 L789,848 L786,848 L786,840 L789,840 Z" fill="#2f78cc"/><rect x="791" y="843" width="8" height="6" fill="#fff"/>
<rect x="821.5" y="834.5" width="92" height="19" fill="#fafafa" stroke="#9c9c9c"/>
<rect x="899" y="835" width="14" height="18" fill="#c8c8c8"/><path d="M903,842 L909,842 L906,845.5 Z" fill="#555"/>
<circle cx="19" cy="843" r="13" fill="#dce8ec" stroke="#2aa0c4" stroke-width="2"/><circle cx="19" cy="843" r="10.5" fill="none" stroke="#2aa0c4" stroke-width="1"/>
<text x="19" y="849.5" text-anchor="middle" font-family="Liberation Sans" font-weight="bold" font-size="17" fill="#2a8fb4">P</text>
<path d="M40,857 L47,857 L43.5,861 Z" fill="#333"/>
<circle cx="1407.4" cy="842.5" r="13" fill="#dce8ec" stroke="#2aa0c4" stroke-width="2"/>
<text x="1407.4" y="850" text-anchor="middle" font-family="Liberation Sans" font-size="18" fill="#2a8fb4">M</text>
<rect x="1279" y="846.5" width="161" height="23" fill="#fbfcfe" stroke="#b8c8d8"/>
<path d="M1257,850 L1279,844 L1284,864 L1262,870 Z" fill="#f0521c"/>
<text x="1270" y="864" text-anchor="middle" font-family="Liberation Sans" font-weight="bold" font-size="19" fill="#fff" transform="rotate(-14 1270 858)">S</text>
<text x="1296" y="864" text-anchor="middle" font-family="Liberation Sans" font-weight="bold" font-size="15" fill="#1e6ec8">中</text>
<path d="M1325,851 C1333,856 1330,868 1316,864 C1324,864 1328,858 1325,851 Z" fill="#1e6ec8"/>
<circle cx="1336" cy="855" r="2" fill="none" stroke="#1e6ec8" stroke-width="1.2"/><path d="M1343,856 C1345,858 1344,862 1341,864" stroke="#1e6ec8" stroke-width="2" fill="none"/>
<rect x="1354" y="852" width="15" height="10" rx="1" fill="none" stroke="#1e6ec8" stroke-width="1.6"/><path d="M1357,855 h9 M1357,858 h9" stroke="#1e6ec8" stroke-width="1.2" stroke-dasharray="1.5 1"/>
<circle cx="1384" cy="853" r="3" fill="#a8b8c8"/><path d="M1378,866 C1378,858 1390,858 1390,866 Z" fill="#a8b8c8"/>
<path d="M1399,853 L1404,851 L1410,851 L1415,853 L1413,858 L1411,857 L1411,865 L1403,865 L1403,857 L1401,858 Z" fill="#1e6ec8"/>
<path d="M1422,866 L1430,858 C1428,854 1432,850 1436,851 L1433,854 L1435,856 L1438,853 C1439,857 1435,861 1431,859 L1424,867 Z" fill="#1e6ec8"/>
<rect x="0" y="869" width="1440" height="5" fill="#2a6ad8"/>
<rect x="0" y="869" width="93" height="5" fill="#3d9a3d"/>
<rect x="1345" y="869" width="95" height="5" fill="#16a2ea"/>
</svg>
<div class="abs" style="left:1338px;top:802px;font-family:'Liberation Mono',monospace;font-size:11px;line-height:13px;color:#333;white-space:pre">41.404 mm</div>

</body></html>
